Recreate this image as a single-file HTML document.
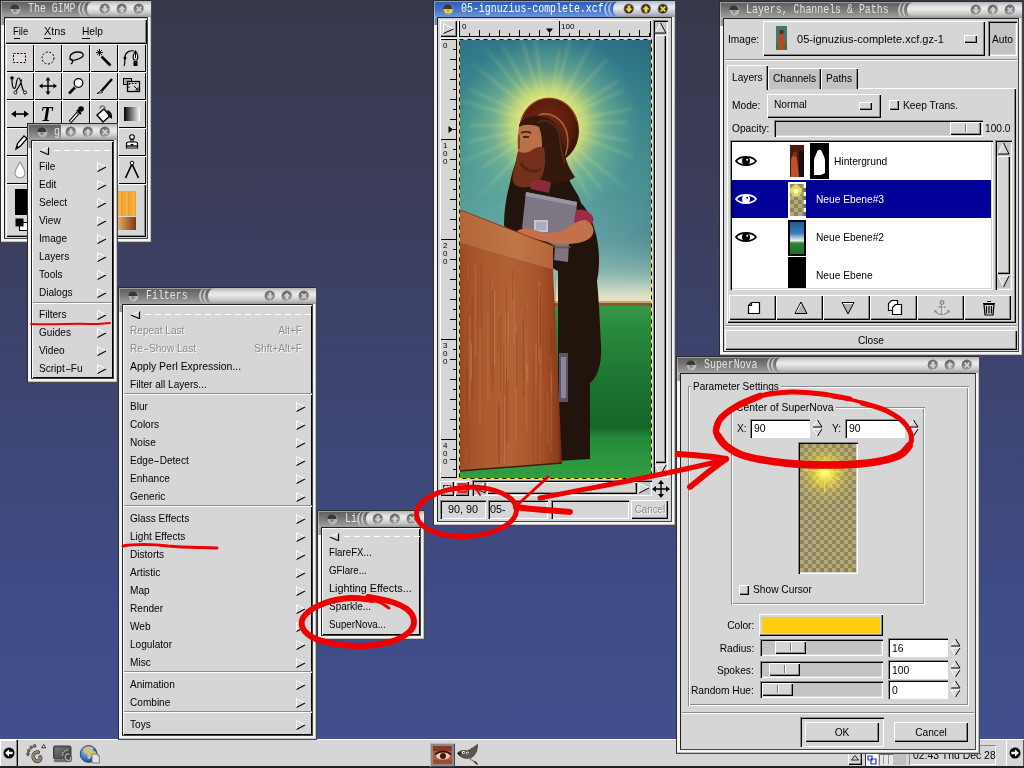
<!DOCTYPE html><html><head><meta charset="utf-8"><title>The GIMP - SuperNova</title><style>
html,body{margin:0;padding:0}
body{width:1024px;height:768px;overflow:hidden;position:relative;background:linear-gradient(180deg,#38384c 0,#3b3d5a 25%,#3d4470 50%,#3f4b84 75%,#41518e 100%);font:11px/14px "Liberation Sans",sans-serif;color:#000}
div,span.t,span.tt,svg{position:absolute;box-sizing:border-box}
svg{overflow:visible}
svg.clip{overflow:hidden}
.t,.tt{opacity:.999}
.t{white-space:nowrap;transform-origin:0 0;line-height:14px}
.tt{font:10px/12px "Liberation Mono",monospace;white-space:nowrap;transform-origin:0 0;transform:scale(.99,1.27);letter-spacing:0}
.hy{display:inline-block;transform:scaleX(1.8);margin:0 1.5px}
.dis{color:#8a8a8a;text-shadow:1px 1px 0 #fff}
.r{background:#d6d6d6;box-shadow:inset 1px 1px 0 #fff,inset -1px -1px 0 #000,inset -2px -2px 0 #8a8a8a}
.rt{background:#d6d6d6;box-shadow:inset 1px 1px 0 #fff,inset -1px -1px 0 #000}
.s{box-shadow:inset 1px 1px 0 #8a8a8a,inset 2px 2px 0 #000,inset -1px -1px 0 #fff,inset -2px -2px 0 #d6d6d6}
.s2{box-shadow:inset 1px 1px 0 #8a8a8a,inset 2px 2px 0 #000,inset -1px -1px 0 #fff}
.wf{background:#f4f4f4;border:1px solid;border-color:#2c2c2c #4a4a4a #4a4a4a #2c2c2c;box-shadow:inset -1px -1px 0 #bdbdbd}
.wc{background:#d6d6d6;border:1px solid;border-color:#222 #444 #444 #222}
.wm{box-shadow:inset 1px 1px 0 #fff,inset -1px -1px 0 #000}
.tb{box-shadow:inset 1px 1px 0 rgba(255,255,255,.4)}
.tbi{background:linear-gradient(180deg,#5c5c5c 0,#7a7a7a 50%,#a2a2a2 100%)}
.tba{background:linear-gradient(180deg,#2f5cb4 0,#3f70c8 50%,#6d96dc 100%)}
.tbp{border-radius:8px 0 0 8px/9px 0 0 9px;border-left:2px solid #c8c8c8;background:transparent}
.tbpa{border-left-color:#a8c0ec}
.tbl{background:linear-gradient(180deg,#b4b4b4 0,#e2e2e2 28%,#eaeaea 45%,#c4c4c4 78%,#989898 100%);border-radius:8px 0 0 8px/9px 0 0 9px}
.tbn{border-radius:0}
.tbla{background:linear-gradient(180deg,#b0b8c8 0,#e0e4ee 30%,#e6e8f0 45%,#b8bcc8 80%,#9094a0 100%)}
</style></head><body>
<svg width="0" height="0" style="left:0;top:0"><defs><linearGradient id="gi" x1="0" y1="0" x2="0" y2="1"><stop offset="0" stop-color="#666"/><stop offset="1" stop-color="#9c9c9c"/></linearGradient><linearGradient id="ring" x1="0" y1="0" x2="1" y2="1"><stop offset="0" stop-color="#4a4a4a"/><stop offset=".5" stop-color="#8a8a8a"/><stop offset="1" stop-color="#fff"/></linearGradient><radialGradient id="ya" cx=".4" cy=".3" r=".8"><stop offset="0" stop-color="#fff6a0"/><stop offset=".6" stop-color="#f0d030"/><stop offset="1" stop-color="#a88a10"/></radialGradient><radialGradient id="globe" cx=".35" cy=".3" r=".8"><stop offset="0" stop-color="#9cc4f4"/><stop offset=".6" stop-color="#3a6ec8"/><stop offset="1" stop-color="#1c3a88"/></radialGradient><linearGradient id="tg" x1="0" y1="0" x2="1" y2="0"><stop offset="0" stop-color="#000"/><stop offset="1" stop-color="#fff"/></linearGradient></defs></svg>
<div class="" style="left:0px;top:739px;width:1024px;height:29px;background:#d6d6d6;border-top:1px solid #fff"></div>
<div class="" style="left:0px;top:766px;width:1024px;height:2px;background:#222"></div>
<div class="" style="left:0px;top:740px;width:18px;height:26px;background:#d6d6d6;box-shadow:inset -1px 0 0 #000,inset -2px 0 0 #8a8a8a,inset 1px 1px 0 #fff"></div>
<div class="" style="left:1006px;top:740px;width:18px;height:26px;background:#d6d6d6;box-shadow:inset 1px 0 0 #fff,inset -1px 0 0 #555"></div>
<svg style="left:3px;top:747px" width="12" height="12" viewBox="0 0 12 12" ><circle cx="6" cy="6" r="5.5" fill="#000"/><path d="M2 6l4-3.5v2.2h3.6v2.6H6v2.2z" fill="#fff"/></svg>
<svg style="left:1009px;top:747px" width="12" height="12" viewBox="0 0 12 12" ><circle cx="6" cy="6" r="5.5" fill="#000"/><path d="M10 6l-4-3.5v2.2H2.4v2.6H6v2.2z" fill="#fff"/></svg>
<svg style="left:24px;top:744px" width="24" height="22" viewBox="0 0 24 22" ><path d="M14.200 8.200C11.200 7.600 8.800 10 9.200 13c.4 3 2.900 4.800 5.400 4.100 2-.6 2.600-2.700 1.500-4" fill="none" stroke="#4a443e" stroke-width="3.800" stroke-linecap="round"/><path d="M14.200 8.200C11.200 7.600 8.800 10 9.200 13c.4 3 2.900 4.800 5.400 4.100 2-.6 2.600-2.700 1.500-4" fill="none" stroke="#90867c" stroke-width="2.300" stroke-linecap="round"/><g fill="#7c7268" stroke="#3c362e" stroke-width=".7"><ellipse cx="4" cy="10" rx="1.300" ry="1.600"/><ellipse cx="4.800" cy="6.600" rx="1.300" ry="1.500"/><ellipse cx="7.200" cy="3.400" rx="1.300" ry="1.500"/><ellipse cx="10.600" cy="1.900" rx="1.400" ry="1.500"/></g><path d="M17.700 3.800l2-3.300 2 3.300z" fill="#fff" stroke="#000" stroke-width=".8"/></svg>
<svg style="left:52px;top:744px" width="22" height="22" viewBox="0 0 22 22" ><defs><linearGradient id="scr" x1="0" y1="0" x2="1" y2="1"><stop offset="0" stop-color="#7a7a7a"/><stop offset="1" stop-color="#3c3c3c"/></linearGradient></defs><rect x="1.500" y="2" width="17.500" height="13" rx="1.500" fill="#585858" stroke="#3a3a3a"/><rect x="3" y="3.500" width="14.500" height="10" fill="url(#scr)"/><path d="M2 16h17l-.5 1.800H2.500z" fill="#7a7a7a" stroke="#4a4a4a" stroke-width=".5"/><path d="M17 10C14.600 9.600 13 11.300 13.300 13.500c.3 2.200 2.200 3.500 4 3 1.500-.4 1.900-2 1.100-3" fill="none" stroke="#3c3834" stroke-width="2.800" stroke-linecap="round"/><path d="M17 10C14.600 9.600 13 11.300 13.300 13.500c.3 2.200 2.200 3.500 4 3 1.500-.4 1.900-2 1.100-3" fill="none" stroke="#b0a8a0" stroke-width="1.600" stroke-linecap="round"/><g fill="#b0a8a0"><circle cx="10.500" cy="11" r=".9"/><circle cx="11" cy="8.700" r=".9"/><circle cx="12.700" cy="6.800" r=".9"/><circle cx="15" cy="6" r=".9"/></g></svg>
<svg style="left:79px;top:744px" width="24" height="22" viewBox="0 0 24 22" ><circle cx="9.600" cy="10" r="8.400" fill="url(#globe)" stroke="#1c3470" stroke-width=".8"/><path d="M6 3.500c2.500-1.500 6-1.500 8 0 1 1-1 2 0 3 1 .8 2.500.5 3 2s-1 3-2.500 3c-2 0-2.500 1.500-3.500 3-.8 1.200-2 .5-2.500-1s.5-2.500-.5-3.500-3-.5-3.500-2 0-3.500 1.500-4.500z" fill="#d2c27a"/><path d="M13 10h5.500l1.800 1.800V19H13z" fill="#e4e4dc" stroke="#6a6a6a" stroke-width=".8"/><path d="M18.500 10v1.800h1.800" fill="none" stroke="#6a6a6a" stroke-width=".6"/></svg>
<div class="" style="left:430px;top:743px;width:25px;height:24px;background:#8a8a8a;box-shadow:inset 1px 1px 0 #b8b8b8,inset -1px -1px 0 #444"></div>
<svg style="left:433px;top:746px" width="19" height="18" viewBox="0 0 19 18" ><rect width="19" height="18" fill="#b4583c"/><rect y="0" width="19" height="5" fill="#8a3a28"/><ellipse cx="10" cy="10" rx="7" ry="3.500" fill="#e8c8b8"/><circle cx="10" cy="10" r="3" fill="#3a1a10"/><path d="M2 8.500c4-4 12-4 16 0" stroke="#3a1008" stroke-width="1.600" fill="none"/><rect y="14" width="19" height="4" fill="#a04830"/></svg>
<svg style="left:456px;top:743px" width="24" height="24" viewBox="0 0 24 24" ><path d="M2 9.500c3-2 6-2.500 9-1.500 3-1 7-4 10.500-6.500 0 4.500-1 8.500-4 11.500-3 2.800-8 3-11.500 1.200C3.500 13 2 11.500 2 9.500z" fill="#5c564c" stroke="#2e2a24" stroke-width=".7"/><circle cx="7.500" cy="9.500" r="2" fill="#fff" stroke="#222" stroke-width=".5"/><circle cx="11.500" cy="10" r="1.800" fill="#fff" stroke="#222" stroke-width=".5"/><circle cx="7.800" cy="9.800" r=".8" fill="#000"/><circle cx="11.800" cy="10.300" r=".7" fill="#000"/><ellipse cx="3.300" cy="10.500" rx="1.800" ry="1.300" fill="#1c1c1c"/><path d="M12 14.500l8.500 5.500" stroke="#8a7a5a" stroke-width="1.300"/><path d="M18.500 18.500l3 3" stroke="#333" stroke-width="1.600"/></svg>
<div class="" style="left:848px;top:752px;width:14px;height:13px;background:#d6d6d6;box-shadow:inset 1px 1px 0 #fff,inset -1px -1px 0 #000,inset -2px -2px 0 #8a8a8a"></div>
<svg style="left:850px;top:754px" width="10" height="8" viewBox="0 0 10 8" ><path d="M1.500 6L5 1.500 8.500 6z" fill="none" stroke="#222" stroke-width="1"/></svg>
<div class="" style="left:865px;top:752px;width:13px;height:14px;background:#fff;box-shadow:inset 1px 1px 0 #333"></div>
<svg style="left:866px;top:753px" width="12" height="13" viewBox="0 0 12 13" ><path d="M2 3h4v4H2zM5 6h5v5H5z" fill="none" stroke="#2030c0" stroke-width="1.200"/></svg>
<div class="" style="left:879px;top:754px;width:14px;height:11px;background:#e8e8e8;box-shadow:inset 1px 1px 0 #777"></div>
<div class="" style="left:883px;top:755px;width:1px;height:9px;background:#999"></div>
<div class="" style="left:888px;top:755px;width:1px;height:9px;background:#999"></div>
<div class="" style="left:893px;top:754px;width:13px;height:11px;background:#c0c0c0"></div>
<div class="" style="left:909px;top:745px;width:87px;height:20px;background:#d6d6d6;box-shadow:inset 1px 1px 0 #8a8a8a,inset -1px -1px 0 #fff"></div>
<span class="t " style="left:913px;top:748.4px;transform:scaleX(0.948);">02:43 Thu Dec 28</span>
<div class="wf" style="left:0px;top:0px;width:152px;height:243px;"></div>
<div class="tb tbi" style="left:1px;top:1px;width:150px;height:16px;"></div>
<div class="tb tbi" style="left:1px;top:17px;width:3px;height:8px;background:#9a9a9a"></div>
<div class="tbp " style="left:78px;top:1px;width:12px;height:16px;"></div>
<div class="tbp " style="left:82px;top:1px;width:12px;height:16px;"></div>
<div class="tbl " style="left:87px;top:1px;width:64px;height:16px;"></div>
<svg style="left:8px;top:2px" width="14" height="14" viewBox="0 0 14 14" ><circle cx="7" cy="7" r="5.400" fill="url(#ring)"/><circle cx="7" cy="7" r="4.500" fill="url(#gi)"/><path d="M2.500 7A4.500 4.500 0 0 0 11.500 7z" fill="#b4b4b4"/><path d="M2.500 7A4.500 4.500 0 0 1 11.500 7z" fill="#383838"/><path d="M4.600 7.600h4.800L7 10.400z" fill="#7c7c7c"/></svg>
<svg style="left:132px;top:2px" width="14" height="14" viewBox="0 0 14 14" ><circle cx="7" cy="7" r="5.400" fill="url(#ring)"/><circle cx="7" cy="7" r="4.500" fill="url(#gi)"/><path d="M4.700 4.700l4.600 4.600M9.300 4.700l-4.600 4.600" stroke="#d2d2d2" stroke-width="1.700" fill="none"/></svg>
<svg style="left:115px;top:2px" width="14" height="14" viewBox="0 0 14 14" ><circle cx="7" cy="7" r="5.400" fill="url(#ring)"/><circle cx="7" cy="7" r="4.500" fill="url(#gi)"/><path d="M5.600 10.600h2.800v-3h2.200L7 3.400 3.400 7.600h2.200z" fill="#d2d2d2"/></svg>
<svg style="left:98px;top:2px" width="14" height="14" viewBox="0 0 14 14" ><circle cx="7" cy="7" r="5.400" fill="url(#ring)"/><circle cx="7" cy="7" r="4.500" fill="url(#gi)"/><path d="M5.600 3.400h2.800v3h2.200L7 10.600 3.400 6.400h2.200z" fill="#d2d2d2"/></svg>
<span class="tt" style="left:28px;top:2.3px;color:#e4e4e4">The GIMP</span>
<div class="wc" style="left:4px;top:17px;width:144px;height:222px;"></div>
<div class="r" style="left:5px;top:19px;width:142px;height:25px;"></div>
<span class="t " style="left:13.3px;top:23.9px;transform:scaleX(0.851);">File</span>
<span class="t " style="left:44px;top:23.9px;transform:scaleX(0.982);">Xtns</span>
<span class="t " style="left:82px;top:23.9px;transform:scaleX(0.927);">Help</span>
<div class="" style="left:14px;top:37.5px;width:6px;height:1px;background:#000"></div>
<div class="" style="left:44px;top:37.5px;width:7px;height:1px;background:#000"></div>
<div class="" style="left:82px;top:37.5px;width:8px;height:1px;background:#000"></div>
<div class="rt" style="left:6px;top:44px;width:28px;height:28px;"></div>
<svg style="left:6px;top:44px" width="28" height="28" viewBox="0 0 28 28" ><rect x="7.500" y="9.500" width="12" height="9" fill="#e4dcdc" stroke="#000" stroke-dasharray="2 1.500"/></svg>
<div class="rt" style="left:34px;top:44px;width:28px;height:28px;"></div>
<svg style="left:34px;top:44px" width="28" height="28" viewBox="0 0 28 28" ><circle cx="14" cy="14" r="6" fill="none" stroke="#000" stroke-dasharray="2 1.600"/></svg>
<div class="rt" style="left:62px;top:44px;width:28px;height:28px;"></div>
<svg style="left:62px;top:44px" width="28" height="28" viewBox="0 0 28 28" ><path d="M8 13c0-3 4-5 8-5s6 2 5 4-5 3-8 4-4 0-5-1zM9.500 15c1.500 1 2 3-.5 5" fill="none" stroke="#000" stroke-width="1.300"/></svg>
<div class="rt" style="left:90px;top:44px;width:28px;height:28px;"></div>
<svg style="left:90px;top:44px" width="28" height="28" viewBox="0 0 28 28" ><path d="M11.500 12.500l9 9" stroke="#000" stroke-width="2.600"/><path d="M7 6l5 5M12 6l-5 5M9.500 5v7M6 8.500h7" stroke="#000" stroke-width=".9"/></svg>
<div class="rt" style="left:118px;top:44px;width:28px;height:28px;"></div>
<svg style="left:118px;top:44px" width="28" height="28" viewBox="0 0 28 28" ><path d="M6 22c2-4 0-6 1-10s5-6 9-5" fill="none" stroke="#000" stroke-width="1.200"/><circle cx="7" cy="14" r="1.500"/><path d="M17.500 7c-3 4-3 6-1.500 9h3c1.500-3 1.500-5-1.500-9z" fill="#fff" stroke="#000" stroke-width="1.200"/><path d="M17.500 8v6" stroke="#000"/><rect x="15.500" y="17" width="4" height="5"/></svg>
<div class="rt" style="left:6px;top:72px;width:28px;height:28px;"></div>
<svg style="left:6px;top:72px" width="28" height="28" viewBox="0 0 28 28" ><circle cx="6" cy="6" r="1.800"/><path d="M6 7.500c0 4 .500 9 2.500 9s1.500-10.500 4-10.500c2.500 0 2 6 5 13M15.500 7.500c0 4-3 8-5.500 11.500" fill="none" stroke="#000" stroke-width="1.200"/><circle cx="9.500" cy="20.500" r="1.500" fill="#fff" stroke="#000"/><circle cx="19" cy="20.500" r="1.500" fill="#fff" stroke="#000"/></svg>
<div class="rt" style="left:34px;top:72px;width:28px;height:28px;"></div>
<svg style="left:34px;top:72px" width="28" height="28" viewBox="0 0 28 28" ><path d="M14 7v14M7 14h14" stroke="#000" stroke-width="1.400"/><path d="M14 5l2.500 3.500h-5zM14 23l2.500-3.500h-5zM5 14l3.500-2.500v5zM23 14l-3.500-2.500v5z"/></svg>
<div class="rt" style="left:62px;top:72px;width:28px;height:28px;"></div>
<svg style="left:62px;top:72px" width="28" height="28" viewBox="0 0 28 28" ><path d="M13 15.500l-6 6" stroke="#000" stroke-width="2.600"/><circle cx="16.500" cy="11" r="4.300" fill="#fff" stroke="#000" stroke-width="1.300"/></svg>
<div class="rt" style="left:90px;top:72px;width:28px;height:28px;"></div>
<svg style="left:90px;top:72px" width="28" height="28" viewBox="0 0 28 28" ><path d="M22 7L11 19.500" stroke="#000" stroke-width="2.400"/><path d="M11.500 18.500l-4.500 3 5.500-1z" fill="#fff" stroke="#000" stroke-width=".8"/></svg>
<div class="rt" style="left:118px;top:72px;width:28px;height:28px;"></div>
<svg style="left:118px;top:72px" width="28" height="28" viewBox="0 0 28 28" ><rect x="5.500" y="6.500" width="8" height="6" fill="#aaa" stroke="#000"/><rect x="9.500" y="9.500" width="12" height="10" fill="#d6d6d6" stroke="#000" stroke-width="1.300"/><path d="M11 11.500h9M11 11.500v6" stroke="#000" stroke-dasharray="1.500 1.500" fill="none"/><path d="M16 14l4 4m0-2.500v2.500h-2.500" stroke="#000" fill="none"/></svg>
<div class="rt" style="left:6px;top:100px;width:28px;height:28px;"></div>
<svg style="left:6px;top:100px" width="28" height="28" viewBox="0 0 28 28" ><path d="M8 14h12" stroke="#000" stroke-width="1.600"/><path d="M5 14l5-3.500v7zM23 14l-5-3.500v7z"/></svg>
<div class="rt" style="left:34px;top:100px;width:28px;height:28px;"></div>
<span class="t" style="left:40.5px;top:103px;font:italic bold 20px/22px 'Liberation Serif',serif">T</span>
<div class="rt" style="left:62px;top:100px;width:28px;height:28px;"></div>
<svg style="left:62px;top:100px" width="28" height="28" viewBox="0 0 28 28" ><path d="M8 22l8-9" stroke="#000" stroke-width="3.400"/><path d="M8.500 21.500l7-8" stroke="#fff" stroke-width="1.400"/><circle cx="19" cy="9" r="2.800"/><path d="M15 10l4 4" stroke="#000" stroke-width="2.200"/></svg>
<div class="rt" style="left:90px;top:100px;width:28px;height:28px;"></div>
<svg style="left:90px;top:100px" width="28" height="28" viewBox="0 0 28 28" ><path d="M7 15l7-6 6 7-7 6z" fill="#fff" stroke="#000" stroke-width="1.400"/><path d="M17 10c4 1 5.500 4 5 9l-3.500-2.500z"/><path d="M10 9c0-4 5-4 5 0" fill="none" stroke="#777" stroke-width="1.300"/></svg>
<div class="rt" style="left:118px;top:100px;width:28px;height:28px;"></div>
<svg style="left:118px;top:100px" width="28" height="28" viewBox="0 0 28 28" ><rect x="6" y="7" width="16" height="14" fill="url(#tg)"/></svg>
<div class="rt" style="left:6px;top:128px;width:28px;height:28px;"></div>
<svg style="left:6px;top:128px" width="28" height="28" viewBox="0 0 28 28" ><path d="M10 21l1.500-5.500 6.500-7.500 3 2.500-6.500 7.500z" fill="#fff" stroke="#000" stroke-width="1.300"/><path d="M10 21l1-3.500 2.300 2z"/></svg>
<div class="rt" style="left:34px;top:128px;width:28px;height:28px;"></div>
<div class="rt" style="left:62px;top:128px;width:28px;height:28px;"></div>
<div class="rt" style="left:90px;top:128px;width:28px;height:28px;"></div>
<div class="rt" style="left:118px;top:128px;width:28px;height:28px;"></div>
<svg style="left:118px;top:128px" width="28" height="28" viewBox="0 0 28 28" ><circle cx="14" cy="9" r="2.300" fill="#fff" stroke="#000" stroke-width="1.100"/><path d="M13 11.500h2v3h-2z" fill="#fff" stroke="#000"/><path d="M8.500 15.500c0-1 1-1.500 2-1.500h7c1 0 2 .500 2 1.500v4.500h-11z" fill="#fff" stroke="#000" stroke-width="1.200"/><path d="M8.500 18h11" stroke="#000" stroke-width="1.400"/><path d="M12 16h4l-2 1.800z"/></svg>
<div class="rt" style="left:6px;top:156px;width:28px;height:28px;"></div>
<svg style="left:6px;top:156px" width="28" height="28" viewBox="0 0 28 28" ><path d="M14 6c3 5 5 8 5 11a5 5 0 0 1-10 0c0-3 2-6 5-11z" fill="#fff" stroke="#9a9a9a" stroke-width="1.200"/></svg>
<div class="rt" style="left:34px;top:156px;width:28px;height:28px;"></div>
<div class="rt" style="left:62px;top:156px;width:28px;height:28px;"></div>
<div class="rt" style="left:90px;top:156px;width:28px;height:28px;"></div>
<div class="rt" style="left:118px;top:156px;width:28px;height:28px;"></div>
<svg style="left:118px;top:156px" width="28" height="28" viewBox="0 0 28 28" ><circle cx="14" cy="7" r="1.800" fill="#fff" stroke="#000"/><path d="M13.500 9L7.500 22M14.500 9l6 13" stroke="#000" stroke-width="1.700" fill="none"/></svg>
<div class="r" style="left:6px;top:184px;width:140px;height:53px;"></div>
<div class="" style="left:15px;top:189px;width:32px;height:26px;background:#000"></div>
<div class="" style="left:26px;top:200px;width:32px;height:26px;background:#fff;z-index:-1"></div>
<svg style="left:15px;top:218px" width="14" height="14" viewBox="0 0 14 14" ><rect x="4.500" y="4.500" width="8" height="8" fill="#fff" stroke="#000"/><rect x=".5" y=".5" width="8" height="8" fill="#000"/></svg>
<div class="" style="left:117px;top:191px;width:19px;height:25px;background:repeating-linear-gradient(90deg,#f0a030 0,#f8b848 3px,#e89828 5px,#f6b040 7px)"></div>
<div class="" style="left:117px;top:217px;width:19px;height:13px;background:linear-gradient(90deg,#e8b070,#7a3a10)"></div>
<div class="wf" style="left:27px;top:123px;width:91px;height:260px;"></div>
<div class="tb tbi" style="left:28px;top:124px;width:89px;height:16px;"></div>
<div class="tb tbi" style="left:28px;top:140px;width:3px;height:8px;background:#9a9a9a"></div>
<div class="tbl tbn" style="left:61px;top:124px;width:56px;height:16px;"></div>
<svg style="left:35px;top:125px" width="14" height="14" viewBox="0 0 14 14" ><circle cx="7" cy="7" r="5.400" fill="url(#ring)"/><circle cx="7" cy="7" r="4.500" fill="url(#gi)"/><path d="M2.500 7A4.500 4.500 0 0 0 11.500 7z" fill="#b4b4b4"/><path d="M2.500 7A4.500 4.500 0 0 1 11.500 7z" fill="#383838"/><path d="M4.600 7.600h4.800L7 10.400z" fill="#7c7c7c"/></svg>
<svg style="left:98px;top:125px" width="14" height="14" viewBox="0 0 14 14" ><circle cx="7" cy="7" r="5.400" fill="url(#ring)"/><circle cx="7" cy="7" r="4.500" fill="url(#gi)"/><path d="M4.700 4.700l4.600 4.600M9.300 4.700l-4.600 4.600" stroke="#d2d2d2" stroke-width="1.700" fill="none"/></svg>
<svg style="left:81px;top:125px" width="14" height="14" viewBox="0 0 14 14" ><circle cx="7" cy="7" r="5.400" fill="url(#ring)"/><circle cx="7" cy="7" r="4.500" fill="url(#gi)"/><path d="M5.600 10.600h2.800v-3h2.200L7 3.400 3.400 7.600h2.200z" fill="#d2d2d2"/></svg>
<svg style="left:64px;top:125px" width="14" height="14" viewBox="0 0 14 14" ><circle cx="7" cy="7" r="5.400" fill="url(#ring)"/><circle cx="7" cy="7" r="4.500" fill="url(#gi)"/><path d="M5.600 3.400h2.800v3h2.200L7 10.600 3.400 6.400h2.200z" fill="#d2d2d2"/></svg>
<span class="tt" style="left:54px;top:125.3px;color:#e4e4e4">g</span>
<div class="wc wm" style="left:31px;top:140px;width:83px;height:239px;"></div>
<svg style="left:38px;top:146px" width="72" height="10" viewBox="0 0 72 10" ><path d="M10.5 1.5V9" stroke="#000" stroke-width="1.2" fill="none"/><path d="M10 1.5L2 5" stroke="#fff" fill="none"/><path d="M2 5L10 8.5" stroke="#000" stroke-width="1.1" fill="none"/><path d="M16 4.5H72" stroke="#fff" stroke-width="1" stroke-dasharray="6 4" fill="none"/></svg>
<span class="t " style="left:39px;top:159.4px;transform:scaleX(0.916);">File</span>
<svg style="left:96px;top:162px" width="11" height="11" viewBox="0 0 11 11" ><path d="M1.5 9.5V0.5L10 5" fill="none" stroke="#fff" stroke-width="1"/><path d="M1.5 9.5L10 5" fill="none" stroke="#000" stroke-width="1.1"/></svg>
<span class="t " style="left:39px;top:177.4px;transform:scaleX(0.916);">Edit</span>
<svg style="left:96px;top:180px" width="11" height="11" viewBox="0 0 11 11" ><path d="M1.5 9.5V0.5L10 5" fill="none" stroke="#fff" stroke-width="1"/><path d="M1.5 9.5L10 5" fill="none" stroke="#000" stroke-width="1.1"/></svg>
<span class="t " style="left:39px;top:195.4px;transform:scaleX(0.916);">Select</span>
<svg style="left:96px;top:198px" width="11" height="11" viewBox="0 0 11 11" ><path d="M1.5 9.5V0.5L10 5" fill="none" stroke="#fff" stroke-width="1"/><path d="M1.5 9.5L10 5" fill="none" stroke="#000" stroke-width="1.1"/></svg>
<span class="t " style="left:39px;top:213.4px;transform:scaleX(0.916);">View</span>
<svg style="left:96px;top:216px" width="11" height="11" viewBox="0 0 11 11" ><path d="M1.5 9.5V0.5L10 5" fill="none" stroke="#fff" stroke-width="1"/><path d="M1.5 9.5L10 5" fill="none" stroke="#000" stroke-width="1.1"/></svg>
<span class="t " style="left:39px;top:231.4px;transform:scaleX(0.916);">Image</span>
<svg style="left:96px;top:234px" width="11" height="11" viewBox="0 0 11 11" ><path d="M1.5 9.5V0.5L10 5" fill="none" stroke="#fff" stroke-width="1"/><path d="M1.5 9.5L10 5" fill="none" stroke="#000" stroke-width="1.1"/></svg>
<span class="t " style="left:39px;top:249.4px;transform:scaleX(0.916);">Layers</span>
<svg style="left:96px;top:252px" width="11" height="11" viewBox="0 0 11 11" ><path d="M1.5 9.5V0.5L10 5" fill="none" stroke="#fff" stroke-width="1"/><path d="M1.5 9.5L10 5" fill="none" stroke="#000" stroke-width="1.1"/></svg>
<span class="t " style="left:39px;top:267.4px;transform:scaleX(0.916);">Tools</span>
<svg style="left:96px;top:270px" width="11" height="11" viewBox="0 0 11 11" ><path d="M1.5 9.5V0.5L10 5" fill="none" stroke="#fff" stroke-width="1"/><path d="M1.5 9.5L10 5" fill="none" stroke="#000" stroke-width="1.1"/></svg>
<span class="t " style="left:39px;top:285.4px;transform:scaleX(0.916);">Dialogs</span>
<svg style="left:96px;top:288px" width="11" height="11" viewBox="0 0 11 11" ><path d="M1.5 9.5V0.5L10 5" fill="none" stroke="#fff" stroke-width="1"/><path d="M1.5 9.5L10 5" fill="none" stroke="#000" stroke-width="1.1"/></svg>
<div class="" style="left:33px;top:302px;width:79px;height:1px;background:#8c8c8c"></div>
<div class="" style="left:33px;top:303px;width:79px;height:1px;background:#fff"></div>
<span class="t " style="left:39px;top:307.4px;transform:scaleX(0.916);">Filters</span>
<svg style="left:96px;top:310px" width="11" height="11" viewBox="0 0 11 11" ><path d="M1.5 9.5V0.5L10 5" fill="none" stroke="#fff" stroke-width="1"/><path d="M1.5 9.5L10 5" fill="none" stroke="#000" stroke-width="1.1"/></svg>
<span class="t " style="left:39px;top:325.4px;transform:scaleX(0.916);">Guides</span>
<svg style="left:96px;top:328px" width="11" height="11" viewBox="0 0 11 11" ><path d="M1.5 9.5V0.5L10 5" fill="none" stroke="#fff" stroke-width="1"/><path d="M1.5 9.5L10 5" fill="none" stroke="#000" stroke-width="1.1"/></svg>
<span class="t " style="left:39px;top:343.4px;transform:scaleX(0.916);">Video</span>
<svg style="left:96px;top:346px" width="11" height="11" viewBox="0 0 11 11" ><path d="M1.5 9.5V0.5L10 5" fill="none" stroke="#fff" stroke-width="1"/><path d="M1.5 9.5L10 5" fill="none" stroke="#000" stroke-width="1.1"/></svg>
<span class="t " style="left:39px;top:361.4px;transform:scaleX(0.916);">Script<span class="hy">-</span>Fu</span>
<svg style="left:96px;top:364px" width="11" height="11" viewBox="0 0 11 11" ><path d="M1.5 9.5V0.5L10 5" fill="none" stroke="#fff" stroke-width="1"/><path d="M1.5 9.5L10 5" fill="none" stroke="#000" stroke-width="1.1"/></svg>
<div class="wf" style="left:118px;top:287px;width:199px;height:453px;"></div>
<div class="tb tbi" style="left:119px;top:288px;width:197px;height:16px;"></div>
<div class="tb tbi" style="left:119px;top:304px;width:3px;height:8px;background:#9a9a9a"></div>
<div class="tbp " style="left:199px;top:288px;width:12px;height:16px;"></div>
<div class="tbp " style="left:203px;top:288px;width:12px;height:16px;"></div>
<div class="tbl " style="left:208px;top:288px;width:108px;height:16px;"></div>
<svg style="left:126px;top:289px" width="14" height="14" viewBox="0 0 14 14" ><circle cx="7" cy="7" r="5.400" fill="url(#ring)"/><circle cx="7" cy="7" r="4.500" fill="url(#gi)"/><path d="M2.500 7A4.500 4.500 0 0 0 11.500 7z" fill="#b4b4b4"/><path d="M2.500 7A4.500 4.500 0 0 1 11.500 7z" fill="#383838"/><path d="M4.600 7.600h4.800L7 10.400z" fill="#7c7c7c"/></svg>
<svg style="left:297px;top:289px" width="14" height="14" viewBox="0 0 14 14" ><circle cx="7" cy="7" r="5.400" fill="url(#ring)"/><circle cx="7" cy="7" r="4.500" fill="url(#gi)"/><path d="M4.700 4.700l4.600 4.600M9.300 4.700l-4.600 4.600" stroke="#d2d2d2" stroke-width="1.700" fill="none"/></svg>
<svg style="left:280px;top:289px" width="14" height="14" viewBox="0 0 14 14" ><circle cx="7" cy="7" r="5.400" fill="url(#ring)"/><circle cx="7" cy="7" r="4.500" fill="url(#gi)"/><path d="M5.600 10.600h2.800v-3h2.200L7 3.400 3.400 7.600h2.200z" fill="#d2d2d2"/></svg>
<svg style="left:263px;top:289px" width="14" height="14" viewBox="0 0 14 14" ><circle cx="7" cy="7" r="5.400" fill="url(#ring)"/><circle cx="7" cy="7" r="4.500" fill="url(#gi)"/><path d="M5.600 3.400h2.800v3h2.200L7 10.600 3.400 6.400h2.200z" fill="#d2d2d2"/></svg>
<span class="tt" style="left:145.5px;top:289.3px;color:#e4e4e4">Filters</span>
<div class="wc wm" style="left:122px;top:304px;width:191px;height:432px;"></div>
<svg style="left:129px;top:310px" width="184" height="10" viewBox="0 0 184 10" ><path d="M10.5 1.5V9" stroke="#000" stroke-width="1.2" fill="none"/><path d="M10 1.5L2 5" stroke="#fff" fill="none"/><path d="M2 5L10 8.5" stroke="#000" stroke-width="1.1" fill="none"/><path d="M16 4.5H184" stroke="#fff" stroke-width="1" stroke-dasharray="6 4" fill="none"/></svg>
<span class="t dis" style="left:130px;top:322.9px;transform:scaleX(0.916);">Repeat Last</span>
<span class="t dis" style="right:722px;top:322.9px;transform-origin:100% 0;transform:scaleX(0.916);">Alt+F</span>
<span class="t dis" style="left:130px;top:340.9px;transform:scaleX(0.916);">Re<span class="hy">-</span>Show Last</span>
<span class="t dis" style="right:722px;top:340.9px;transform-origin:100% 0;transform:scaleX(0.916);">Shft+Alt+F</span>
<span class="t " style="left:130px;top:358.9px;transform:scaleX(0.952);">Apply Perl Expression...</span>
<span class="t " style="left:130px;top:376.9px;transform:scaleX(0.916);">Filter all Layers...</span>
<div class="" style="left:124px;top:393px;width:188px;height:1px;background:#8c8c8c"></div>
<div class="" style="left:124px;top:394px;width:188px;height:1px;background:#fff"></div>
<span class="t " style="left:130px;top:398.9px;transform:scaleX(0.916);">Blur</span>
<svg style="left:295px;top:401.5px" width="11" height="11" viewBox="0 0 11 11" ><path d="M1.5 9.5V0.5L10 5" fill="none" stroke="#fff" stroke-width="1"/><path d="M1.5 9.5L10 5" fill="none" stroke="#000" stroke-width="1.1"/></svg>
<span class="t " style="left:130px;top:416.9px;transform:scaleX(0.916);">Colors</span>
<svg style="left:295px;top:419.5px" width="11" height="11" viewBox="0 0 11 11" ><path d="M1.5 9.5V0.5L10 5" fill="none" stroke="#fff" stroke-width="1"/><path d="M1.5 9.5L10 5" fill="none" stroke="#000" stroke-width="1.1"/></svg>
<span class="t " style="left:130px;top:434.9px;transform:scaleX(0.916);">Noise</span>
<svg style="left:295px;top:437.5px" width="11" height="11" viewBox="0 0 11 11" ><path d="M1.5 9.5V0.5L10 5" fill="none" stroke="#fff" stroke-width="1"/><path d="M1.5 9.5L10 5" fill="none" stroke="#000" stroke-width="1.1"/></svg>
<span class="t " style="left:130px;top:452.9px;transform:scaleX(0.916);">Edge<span class="hy">-</span>Detect</span>
<svg style="left:295px;top:455.5px" width="11" height="11" viewBox="0 0 11 11" ><path d="M1.5 9.5V0.5L10 5" fill="none" stroke="#fff" stroke-width="1"/><path d="M1.5 9.5L10 5" fill="none" stroke="#000" stroke-width="1.1"/></svg>
<span class="t " style="left:130px;top:470.9px;transform:scaleX(0.916);">Enhance</span>
<svg style="left:295px;top:473.5px" width="11" height="11" viewBox="0 0 11 11" ><path d="M1.5 9.5V0.5L10 5" fill="none" stroke="#fff" stroke-width="1"/><path d="M1.5 9.5L10 5" fill="none" stroke="#000" stroke-width="1.1"/></svg>
<span class="t " style="left:130px;top:488.9px;transform:scaleX(0.916);">Generic</span>
<svg style="left:295px;top:491.5px" width="11" height="11" viewBox="0 0 11 11" ><path d="M1.5 9.5V0.5L10 5" fill="none" stroke="#fff" stroke-width="1"/><path d="M1.5 9.5L10 5" fill="none" stroke="#000" stroke-width="1.1"/></svg>
<div class="" style="left:124px;top:505px;width:188px;height:1px;background:#8c8c8c"></div>
<div class="" style="left:124px;top:506px;width:188px;height:1px;background:#fff"></div>
<span class="t " style="left:130px;top:510.9px;transform:scaleX(0.916);">Glass Effects</span>
<svg style="left:295px;top:513.5px" width="11" height="11" viewBox="0 0 11 11" ><path d="M1.5 9.5V0.5L10 5" fill="none" stroke="#fff" stroke-width="1"/><path d="M1.5 9.5L10 5" fill="none" stroke="#000" stroke-width="1.1"/></svg>
<span class="t " style="left:130px;top:528.9px;transform:scaleX(0.916);">Light Effects</span>
<svg style="left:295px;top:531.5px" width="11" height="11" viewBox="0 0 11 11" ><path d="M1.5 9.5V0.5L10 5" fill="none" stroke="#fff" stroke-width="1"/><path d="M1.5 9.5L10 5" fill="none" stroke="#000" stroke-width="1.1"/></svg>
<span class="t " style="left:130px;top:546.9px;transform:scaleX(0.916);">Distorts</span>
<svg style="left:295px;top:549.5px" width="11" height="11" viewBox="0 0 11 11" ><path d="M1.5 9.5V0.5L10 5" fill="none" stroke="#fff" stroke-width="1"/><path d="M1.5 9.5L10 5" fill="none" stroke="#000" stroke-width="1.1"/></svg>
<span class="t " style="left:130px;top:564.9px;transform:scaleX(0.916);">Artistic</span>
<svg style="left:295px;top:567.5px" width="11" height="11" viewBox="0 0 11 11" ><path d="M1.5 9.5V0.5L10 5" fill="none" stroke="#fff" stroke-width="1"/><path d="M1.5 9.5L10 5" fill="none" stroke="#000" stroke-width="1.1"/></svg>
<span class="t " style="left:130px;top:582.9px;transform:scaleX(0.916);">Map</span>
<svg style="left:295px;top:585.5px" width="11" height="11" viewBox="0 0 11 11" ><path d="M1.5 9.5V0.5L10 5" fill="none" stroke="#fff" stroke-width="1"/><path d="M1.5 9.5L10 5" fill="none" stroke="#000" stroke-width="1.1"/></svg>
<span class="t " style="left:130px;top:600.9px;transform:scaleX(0.916);">Render</span>
<svg style="left:295px;top:603.5px" width="11" height="11" viewBox="0 0 11 11" ><path d="M1.5 9.5V0.5L10 5" fill="none" stroke="#fff" stroke-width="1"/><path d="M1.5 9.5L10 5" fill="none" stroke="#000" stroke-width="1.1"/></svg>
<span class="t " style="left:130px;top:618.9px;transform:scaleX(0.916);">Web</span>
<svg style="left:295px;top:621.5px" width="11" height="11" viewBox="0 0 11 11" ><path d="M1.5 9.5V0.5L10 5" fill="none" stroke="#fff" stroke-width="1"/><path d="M1.5 9.5L10 5" fill="none" stroke="#000" stroke-width="1.1"/></svg>
<span class="t " style="left:130px;top:636.9px;transform:scaleX(0.916);">Logulator</span>
<svg style="left:295px;top:639.5px" width="11" height="11" viewBox="0 0 11 11" ><path d="M1.5 9.5V0.5L10 5" fill="none" stroke="#fff" stroke-width="1"/><path d="M1.5 9.5L10 5" fill="none" stroke="#000" stroke-width="1.1"/></svg>
<span class="t " style="left:130px;top:654.9px;transform:scaleX(0.916);">Misc</span>
<svg style="left:295px;top:657.5px" width="11" height="11" viewBox="0 0 11 11" ><path d="M1.5 9.5V0.5L10 5" fill="none" stroke="#fff" stroke-width="1"/><path d="M1.5 9.5L10 5" fill="none" stroke="#000" stroke-width="1.1"/></svg>
<div class="" style="left:124px;top:671px;width:188px;height:1px;background:#8c8c8c"></div>
<div class="" style="left:124px;top:672px;width:188px;height:1px;background:#fff"></div>
<span class="t " style="left:130px;top:676.9px;transform:scaleX(0.916);">Animation</span>
<svg style="left:295px;top:679.5px" width="11" height="11" viewBox="0 0 11 11" ><path d="M1.5 9.5V0.5L10 5" fill="none" stroke="#fff" stroke-width="1"/><path d="M1.5 9.5L10 5" fill="none" stroke="#000" stroke-width="1.1"/></svg>
<span class="t " style="left:130px;top:694.9px;transform:scaleX(0.916);">Combine</span>
<svg style="left:295px;top:697.5px" width="11" height="11" viewBox="0 0 11 11" ><path d="M1.5 9.5V0.5L10 5" fill="none" stroke="#fff" stroke-width="1"/><path d="M1.5 9.5L10 5" fill="none" stroke="#000" stroke-width="1.1"/></svg>
<div class="" style="left:124px;top:711px;width:188px;height:1px;background:#8c8c8c"></div>
<div class="" style="left:124px;top:712px;width:188px;height:1px;background:#fff"></div>
<span class="t " style="left:130px;top:716.9px;transform:scaleX(0.916);">Toys</span>
<svg style="left:295px;top:719.5px" width="11" height="11" viewBox="0 0 11 11" ><path d="M1.5 9.5V0.5L10 5" fill="none" stroke="#fff" stroke-width="1"/><path d="M1.5 9.5L10 5" fill="none" stroke="#000" stroke-width="1.1"/></svg>
<div class="wf" style="left:317px;top:510px;width:108px;height:130px;"></div>
<div class="tb tbi" style="left:318px;top:511px;width:106px;height:16px;"></div>
<div class="tb tbi" style="left:318px;top:527px;width:3px;height:8px;background:#9a9a9a"></div>
<div class="tbp " style="left:357px;top:511px;width:12px;height:16px;"></div>
<div class="tbp " style="left:361px;top:511px;width:12px;height:16px;"></div>
<div class="tbl " style="left:366px;top:511px;width:58px;height:16px;"></div>
<svg style="left:325px;top:512px" width="14" height="14" viewBox="0 0 14 14" ><circle cx="7" cy="7" r="5.400" fill="url(#ring)"/><circle cx="7" cy="7" r="4.500" fill="url(#gi)"/><path d="M2.500 7A4.500 4.500 0 0 0 11.500 7z" fill="#b4b4b4"/><path d="M2.500 7A4.500 4.500 0 0 1 11.500 7z" fill="#383838"/><path d="M4.600 7.600h4.800L7 10.400z" fill="#7c7c7c"/></svg>
<svg style="left:405px;top:512px" width="14" height="14" viewBox="0 0 14 14" ><circle cx="7" cy="7" r="5.400" fill="url(#ring)"/><circle cx="7" cy="7" r="4.500" fill="url(#gi)"/><path d="M4.700 4.700l4.600 4.600M9.300 4.700l-4.600 4.600" stroke="#d2d2d2" stroke-width="1.700" fill="none"/></svg>
<svg style="left:388px;top:512px" width="14" height="14" viewBox="0 0 14 14" ><circle cx="7" cy="7" r="5.400" fill="url(#ring)"/><circle cx="7" cy="7" r="4.500" fill="url(#gi)"/><path d="M5.600 10.600h2.800v-3h2.200L7 3.400 3.400 7.600h2.200z" fill="#d2d2d2"/></svg>
<svg style="left:371px;top:512px" width="14" height="14" viewBox="0 0 14 14" ><circle cx="7" cy="7" r="5.400" fill="url(#ring)"/><circle cx="7" cy="7" r="4.500" fill="url(#gi)"/><path d="M5.600 3.400h2.800v3h2.200L7 10.600 3.400 6.400h2.200z" fill="#d2d2d2"/></svg>
<span class="tt" style="left:344.5px;top:512.3px;color:#e4e4e4">Li</span>
<div class="wc wm" style="left:321px;top:527px;width:100px;height:109px;"></div>
<svg style="left:328px;top:532px" width="92" height="10" viewBox="0 0 92 10" ><path d="M10.5 1.5V9" stroke="#000" stroke-width="1.2" fill="none"/><path d="M10 1.5L2 5" stroke="#fff" fill="none"/><path d="M2 5L10 8.5" stroke="#000" stroke-width="1.1" fill="none"/><path d="M16 4.5H92" stroke="#fff" stroke-width="1" stroke-dasharray="6 4" fill="none"/></svg>
<span class="t " style="left:329px;top:544.9px;transform:scaleX(0.884);">FlareFX...</span>
<span class="t " style="left:329px;top:562.9px;transform:scaleX(0.884);">GFlare...</span>
<span class="t " style="left:329px;top:580.9px;transform:scaleX(0.982);">Lighting Effects...</span>
<span class="t " style="left:329px;top:598.9px;transform:scaleX(0.905);">Sparkle...</span>
<span class="t " style="left:329px;top:616.9px;transform:scaleX(0.884);">SuperNova...</span>
<div class="wf" style="left:433px;top:0px;width:243px;height:526px;"></div>
<div class="tb tba" style="left:434px;top:1px;width:241px;height:16px;"></div>
<div class="tb tba" style="left:434px;top:17px;width:3px;height:8px;background:#6d8fd0"></div>
<div class="tbp tbpa" style="left:604px;top:1px;width:12px;height:16px;"></div>
<div class="tbp tbpa" style="left:608px;top:1px;width:12px;height:16px;"></div>
<div class="tbl tbla" style="left:613px;top:1px;width:62px;height:16px;"></div>
<svg style="left:441px;top:2px" width="14" height="14" viewBox="0 0 14 14" ><circle cx="7" cy="7" r="5.400" fill="url(#ring)"/><circle cx="7" cy="7" r="4.500" fill="#3a3222"/><path d="M2.500 7A4.500 4.500 0 0 0 11.500 7z" fill="#f2d63c"/><path d="M2.500 7A4.500 4.500 0 0 1 11.500 7z" fill="#383838"/><path d="M4.600 7.600h4.800L7 10.400z" fill="#c8a820"/></svg>
<svg style="left:656px;top:2px" width="14" height="14" viewBox="0 0 14 14" ><circle cx="7" cy="7" r="5.400" fill="url(#ring)"/><circle cx="7" cy="7" r="4.500" fill="#3a3222"/><path d="M4.700 4.700l4.600 4.600M9.300 4.700l-4.600 4.600" stroke="#f2d63c" stroke-width="1.700" fill="none"/></svg>
<svg style="left:639px;top:2px" width="14" height="14" viewBox="0 0 14 14" ><circle cx="7" cy="7" r="5.400" fill="url(#ring)"/><circle cx="7" cy="7" r="4.500" fill="#3a3222"/><path d="M5.600 10.600h2.800v-3h2.200L7 3.400 3.400 7.600h2.200z" fill="#f2d63c"/></svg>
<svg style="left:622px;top:2px" width="14" height="14" viewBox="0 0 14 14" ><circle cx="7" cy="7" r="5.400" fill="url(#ring)"/><circle cx="7" cy="7" r="4.500" fill="#3a3222"/><path d="M5.600 3.400h2.800v3h2.200L7 10.600 3.400 6.400h2.200z" fill="#f2d63c"/></svg>
<span class="tt" style="left:460.8px;top:2.3px;color:#fff">05-ignuzius-complete.xcf</span>
<div class="wc" style="left:437px;top:17px;width:235px;height:505px;"></div>
<div class="r" style="left:440px;top:20px;width:17px;height:17px;"></div>
<svg style="left:442px;top:22px" width="13" height="13" viewBox="0 0 13 13" ><path d="M1.500 11.500V1.500L11.500 7" fill="none" stroke="#fff"/><path d="M1.500 11.500L11.500 7" fill="none" stroke="#000"/></svg>
<div class="" style="left:458px;top:20px;width:193px;height:17px;background:#d6d6d6;box-shadow:inset 1px 1px 0 #fff,inset -1px -1px 0 #000"></div>
<svg style="left:458px;top:20px;opacity:.999" width="194" height="17" viewBox="0 0 194 17" ><path d="M1.5 16V1" stroke="#000"/><path d="M11.5 16V13" stroke="#000"/><path d="M21.5 16V10" stroke="#000"/><path d="M31.5 16V13" stroke="#000"/><path d="M41.5 16V10" stroke="#000"/><path d="M51.5 16V13" stroke="#000"/><path d="M61.5 16V10" stroke="#000"/><path d="M71.5 16V13" stroke="#000"/><path d="M81.5 16V10" stroke="#000"/><path d="M91.5 16V13" stroke="#000"/><path d="M101.5 16V1" stroke="#000"/><path d="M111.5 16V13" stroke="#000"/><path d="M121.5 16V10" stroke="#000"/><path d="M131.5 16V13" stroke="#000"/><path d="M141.5 16V10" stroke="#000"/><path d="M151.5 16V13" stroke="#000"/><path d="M161.5 16V10" stroke="#000"/><path d="M171.5 16V13" stroke="#000"/><path d="M181.5 16V10" stroke="#000"/><path d="M191.5 16V13" stroke="#000"/><path d="M91.500 13l-3.500-4.500h7z" fill="#000"/><text x="4" y="8.500" font-size="8" font-family="Liberation Sans,sans-serif">0</text><text x="103" y="8.500" font-size="8" font-family="Liberation Sans,sans-serif">100</text></svg>
<div class="" style="left:440px;top:38px;width:17px;height:440px;background:#d6d6d6;box-shadow:inset 1px 1px 0 #fff,inset -1px -1px 0 #000"></div>
<svg style="left:440px;top:38px;opacity:.999" width="17" height="440" viewBox="0 0 17 440" ><path d="M16 1.5H1" stroke="#000"/><path d="M16 11.5H13" stroke="#000"/><path d="M16 21.5H10" stroke="#000"/><path d="M16 31.5H13" stroke="#000"/><path d="M16 41.5H10" stroke="#000"/><path d="M16 51.5H13" stroke="#000"/><path d="M16 61.5H10" stroke="#000"/><path d="M16 71.5H13" stroke="#000"/><path d="M16 81.5H10" stroke="#000"/><path d="M16 91.5H13" stroke="#000"/><path d="M16 101.5H1" stroke="#000"/><path d="M16 111.5H13" stroke="#000"/><path d="M16 121.5H10" stroke="#000"/><path d="M16 131.5H13" stroke="#000"/><path d="M16 141.5H10" stroke="#000"/><path d="M16 151.5H13" stroke="#000"/><path d="M16 161.5H10" stroke="#000"/><path d="M16 171.5H13" stroke="#000"/><path d="M16 181.5H10" stroke="#000"/><path d="M16 191.5H13" stroke="#000"/><path d="M16 201.5H1" stroke="#000"/><path d="M16 211.5H13" stroke="#000"/><path d="M16 221.5H10" stroke="#000"/><path d="M16 231.5H13" stroke="#000"/><path d="M16 241.5H10" stroke="#000"/><path d="M16 251.5H13" stroke="#000"/><path d="M16 261.5H10" stroke="#000"/><path d="M16 271.5H13" stroke="#000"/><path d="M16 281.5H10" stroke="#000"/><path d="M16 291.5H13" stroke="#000"/><path d="M16 301.5H1" stroke="#000"/><path d="M16 311.5H13" stroke="#000"/><path d="M16 321.5H10" stroke="#000"/><path d="M16 331.5H13" stroke="#000"/><path d="M16 341.5H10" stroke="#000"/><path d="M16 351.5H13" stroke="#000"/><path d="M16 361.5H10" stroke="#000"/><path d="M16 371.5H13" stroke="#000"/><path d="M16 381.5H10" stroke="#000"/><path d="M16 391.5H13" stroke="#000"/><path d="M16 401.5H1" stroke="#000"/><path d="M16 411.5H13" stroke="#000"/><path d="M16 421.5H10" stroke="#000"/><path d="M16 431.5H13" stroke="#000"/><path d="M13 91.500l-4.500-3.500v7z" fill="#000"/><text x="3" y="10" font-size="8" font-family="Liberation Sans,sans-serif">0</text><text x="3" y="110" font-size="8" font-family="Liberation Sans,sans-serif">1</text><text x="3" y="118" font-size="8" font-family="Liberation Sans,sans-serif">0</text><text x="3" y="126" font-size="8" font-family="Liberation Sans,sans-serif">0</text><text x="3" y="210" font-size="8" font-family="Liberation Sans,sans-serif">2</text><text x="3" y="218" font-size="8" font-family="Liberation Sans,sans-serif">0</text><text x="3" y="226" font-size="8" font-family="Liberation Sans,sans-serif">0</text><text x="3" y="310" font-size="8" font-family="Liberation Sans,sans-serif">3</text><text x="3" y="318" font-size="8" font-family="Liberation Sans,sans-serif">0</text><text x="3" y="326" font-size="8" font-family="Liberation Sans,sans-serif">0</text><text x="3" y="410" font-size="8" font-family="Liberation Sans,sans-serif">4</text><text x="3" y="418" font-size="8" font-family="Liberation Sans,sans-serif">0</text><text x="3" y="426" font-size="8" font-family="Liberation Sans,sans-serif">0</text></svg>
<svg style="left:459px;top:39px" width="193" height="440" viewBox="0 0 193 440" class="clip"><defs><linearGradient id="sky" x1="0" y1="0" x2="0" y2="1"><stop offset="0" stop-color="#34808c"/><stop offset=".3" stop-color="#449490"/><stop offset=".6" stop-color="#5aa29c"/><stop offset=".78" stop-color="#74b0a8"/><stop offset=".88" stop-color="#96c2b6"/><stop offset=".95" stop-color="#cddac4"/><stop offset="1" stop-color="#f0e6c6"/></linearGradient><radialGradient id="glow" cx="89" cy="86" r="92" gradientUnits="userSpaceOnUse"><stop offset="0" stop-color="#ffffd8"/><stop offset=".22" stop-color="#f2f080"/><stop offset=".4" stop-color="#d2e078" stop-opacity=".85"/><stop offset=".62" stop-color="#98c890" stop-opacity=".45"/><stop offset="1" stop-color="#70b0a0" stop-opacity="0"/></radialGradient><linearGradient id="grass" x1="0" y1="0" x2="0" y2="1"><stop offset="0" stop-color="#3a9848"/><stop offset=".12" stop-color="#2a8a3c"/><stop offset=".45" stop-color="#1c7432"/><stop offset=".7" stop-color="#16662a"/><stop offset=".76" stop-color="#248a3a"/><stop offset="1" stop-color="#32a044"/></linearGradient><linearGradient id="wood" x1="0" y1="0" x2="1" y2="0"><stop offset="0" stop-color="#9e4c26"/><stop offset=".25" stop-color="#ac5a30"/><stop offset=".5" stop-color="#b26236"/><stop offset=".8" stop-color="#a6522a"/><stop offset=".96" stop-color="#8c3c1a"/><stop offset="1" stop-color="#64260c"/></linearGradient><linearGradient id="woodtop" x1="0" y1="0" x2="1" y2="0"><stop offset="0" stop-color="#b2663a"/><stop offset=".6" stop-color="#c07646"/><stop offset="1" stop-color="#b4663a"/></linearGradient><radialGradient id="edge" cx="70" cy="115" r="165" gradientUnits="userSpaceOnUse"><stop offset=".35" stop-color="#1e5a80" stop-opacity="0"/><stop offset=".75" stop-color="#1e5a80" stop-opacity=".26"/><stop offset="1" stop-color="#1c5078" stop-opacity=".45"/></radialGradient><linearGradient id="fade" x1="0" y1="0" x2="0" y2="1"><stop offset="0" stop-color="#fff"/><stop offset=".75" stop-color="#fff"/><stop offset="1" stop-color="#000"/></linearGradient><mask id="em" maskUnits="userSpaceOnUse" x="0" y="0" width="200" height="256"><rect width="200" height="256" fill="url(#fade)"/></mask><radialGradient id="rayg" cx="89" cy="86" r="110" gradientUnits="userSpaceOnUse"><stop offset="0" stop-color="#fff890" stop-opacity=".5"/><stop offset=".5" stop-color="#e8ec80" stop-opacity=".2"/><stop offset="1" stop-color="#c0e0a0" stop-opacity="0"/></radialGradient><filter id="blur1" x="-10%" y="-10%" width="120%" height="120%"><feGaussianBlur stdDeviation="1.3"/></filter><radialGradient id="hat" cx="88" cy="84" r="34" gradientUnits="userSpaceOnUse"><stop offset="0" stop-color="#742812"/><stop offset=".7" stop-color="#5c1c0c"/><stop offset="1" stop-color="#421208"/></radialGradient></defs><rect width="193" height="440" fill="#f2e6c4"/><rect width="193" height="264" fill="url(#sky)"/><rect width="193" height="256" fill="url(#edge)" mask="url(#em)"/><rect width="193" height="264" fill="url(#glow)"/><path d="M89 86L168.0 81.2L168.1 85.0ZM89 86L169.0 99.8L168.3 103.7ZM89 86L175.0 115.8L173.5 120.0ZM89 86L173.4 151.8L170.1 155.8ZM89 86L144.3 149.0L141.2 151.7ZM89 86L133.5 159.7L129.8 161.8ZM89 86L118.7 159.5L115.1 160.8ZM89 86L107.9 196.5L102.4 197.3ZM89 86L75.5 192.4L70.3 191.6ZM89 86L62.1 164.2L58.3 162.8ZM89 86L43.4 175.1L39.1 172.8ZM89 86L15.3 166.6L11.5 162.9ZM89 86L24.2 130.3L22.1 127.1ZM89 86L-3.7 128.3L-5.6 123.8ZM89 86L9.1 105.0L8.3 101.0ZM89 86L10.5 88.2L10.4 84.4ZM89 86L-17.3 59.3L-15.9 54.2ZM89 86L8.9 52.0L10.7 48.2ZM89 86L11.7 25.9L14.8 22.2ZM89 86L18.5 3.0L22.6 -0.4ZM89 86L41.4 7.8L45.3 5.6ZM89 86L59.6 -1.4L63.9 -2.8ZM89 86L73.7 0.1L77.9 -0.5ZM89 86L98.5 9.9L102.2 10.4ZM89 86L111.5 -11.5L116.2 -10.3ZM89 86L132.5 0.0L136.7 2.2ZM89 86L146.5 18.4L149.7 21.3ZM89 86L158.1 40.4L160.3 43.8ZM89 86L163.6 49.4L165.3 53.1ZM89 86L173.1 67.6L173.9 71.7Z" fill="url(#rayg)" filter="url(#blur1)"/><rect y="262" width="193" height="3" fill="#c8a878"/><rect y="264" width="193" height="4" fill="#8a5a2c"/><rect y="267" width="193" height="173" fill="url(#grass)"/><ellipse cx="90" cy="92" rx="30" ry="33" fill="url(#hat)"/><path d="M62 82a29 31 0 0 1 56 0" fill="none" stroke="#9a4420" stroke-width="1.2"/><path d="M80 76c12-4 24 4 28 18 2 10 0 20-4 26" fill="none" stroke="#a87848" stroke-width="1.6" stroke-opacity=".8"/><path d="M58 120c-4 10-6 18-7 24-4 14-6 28-6 42l8 22 46 24 0 190 32-2 0-76c8-6 12-20 11-38-1-20-2-44-4-64 3-14 3-34-2-50-3-12-8-22-14-28-2-8-6-12-8-16-6-10-10-24-14-36z" fill="#21140c"/><path d="M60 86c6-10 24-12 34-4 8 8 10 22 12 34 2 10 6 16 10 22-10 8-28 8-40 4z" fill="#34180c"/><path d="M78 84c8-6 18 0 22 10 2 10 2 22 6 30" fill="none" stroke="#5a3018" stroke-width="2" stroke-opacity=".7"/><path d="M60 88c4-3 14-3 20 0 3 8 4 18 2 28-6 6-16 6-22 2-2-10-2-20 0-30z" fill="#bc7048"/><path d="M62 94c3-1.500 7-1.500 10 0" stroke="#3a1a0c" stroke-width="1.400" fill="none"/><path d="M64 98h6" stroke="#2a120a" stroke-width="1.600"/><path d="M60 96v14" stroke="#8a4428" stroke-width="2"/><path d="M59 112c4 3 10 2 14-1 4-3 8-4 12-2 2 10 2 22-4 32-6 8-18 10-26 4-2-4-2-8 0-14 2-8 2-12 4-19z" fill="#74301a"/><path d="M62 124c4 8 12 10 20 6" stroke="#4a1c0e" stroke-width="3" fill="none" stroke-opacity=".6"/><path d="M70 144c6-4 16-4 22 0l-2 10-18-4z" fill="#8a2a3a"/><path d="M67 153l51 10-3 40-5 0-1 20-14-2 1-14-33-18z" fill="#7e7682"/><path d="M67 153l51 10-.500 4-51-10z" fill="#9a94a0"/><rect x="75" y="181" width="14" height="12" fill="#c4c6d4"/><rect x="77" y="183" width="10" height="8" fill="#a8acc0"/><path d="M117 171c8-2 16 2 18 10l-6 8-14-6z" fill="#9c2a48"/><path d="M58 192c6-4 12-3 18-1 10 4 22 4 32-2 6-4 12-8 18-8 6 2 10 8 8 14-4 8-16 10-28 10-14 0-24-4-34-6-8-1-12-4-14-7z" fill="#c4704a"/><path d="M62 200c10 4 30 10 50 8" stroke="#8a3c20" stroke-width="2" fill="none" stroke-opacity=".7"/><rect x="100" y="314" width="9" height="49" fill="#5c5660"/><rect x="102" y="318" width="5" height="41" fill="#8a86a0"/><path d="M0 203L94 230 103 424 0 432z" fill="url(#wood)"/><path d="M0 172h4l90 35v23L0 203z" fill="url(#woodtop)"/><path d="M0 172h4l90 35" stroke="#8a3a1c" stroke-width="1" fill="none"/><path d="M32.8 239V325" stroke="#d08a58" stroke-opacity=".38" stroke-width="1"/><path d="M80.0 243V324" stroke="#d8986a" stroke-opacity=".38" stroke-width="1"/><path d="M22.4 225V290" stroke="#7e3416" stroke-opacity=".38" stroke-width="1"/><path d="M10.6 276V380" stroke="#d08a58" stroke-opacity=".38" stroke-width="1"/><path d="M92.0 333V413" stroke="#d08a58" stroke-opacity=".38" stroke-width="1"/><path d="M56.8 285V403" stroke="#d08a58" stroke-opacity=".38" stroke-width="1"/><path d="M54.9 242V307" stroke="#d8986a" stroke-opacity=".38" stroke-width="1"/><path d="M13.2 258V361" stroke="#7e3416" stroke-opacity=".38" stroke-width="1"/><path d="M11.8 300V343" stroke="#d08a58" stroke-opacity=".38" stroke-width="1"/><path d="M54.0 231V261" stroke="#7e3416" stroke-opacity=".38" stroke-width="1"/><path d="M49.2 304V403" stroke="#94421e" stroke-opacity=".38" stroke-width="1"/><path d="M57.6 294V348" stroke="#7e3416" stroke-opacity=".38" stroke-width="1"/><path d="M68.4 264V343" stroke="#d8986a" stroke-opacity=".38" stroke-width="1"/><path d="M49.0 274V342" stroke="#d8986a" stroke-opacity=".38" stroke-width="1"/><path d="M95.1 251V316" stroke="#8a3c1c" stroke-opacity=".38" stroke-width="1"/><path d="M16.4 288V317" stroke="#d08a58" stroke-opacity=".38" stroke-width="1"/><path d="M74.6 318V424" stroke="#8a3c1c" stroke-opacity=".38" stroke-width="1"/><path d="M34.3 271V343" stroke="#94421e" stroke-opacity=".38" stroke-width="1"/><path d="M8.5 222V273" stroke="#d08a58" stroke-opacity=".38" stroke-width="1"/><path d="M7.8 319V406" stroke="#94421e" stroke-opacity=".38" stroke-width="1"/><path d="M29.0 275V364" stroke="#d08a58" stroke-opacity=".38" stroke-width="1"/><path d="M91.4 288V371" stroke="#94421e" stroke-opacity=".38" stroke-width="1"/><path d="M7.6 330V367" stroke="#7e3416" stroke-opacity=".38" stroke-width="1"/><path d="M39.8 363V424" stroke="#7e3416" stroke-opacity=".38" stroke-width="1"/><path d="M44.7 306V415" stroke="#94421e" stroke-opacity=".38" stroke-width="1"/><path d="M84.1 274V338" stroke="#8a3c1c" stroke-opacity=".38" stroke-width="1"/><path d="M66.9 285V332" stroke="#d08a58" stroke-opacity=".38" stroke-width="1"/><path d="M18.7 248V295" stroke="#94421e" stroke-opacity=".38" stroke-width="1"/><path d="M81.0 258V309" stroke="#7e3416" stroke-opacity=".38" stroke-width="1"/><path d="M41.8 276V355" stroke="#7e3416" stroke-opacity=".38" stroke-width="1"/><path d="M67.6 307V391" stroke="#d08a58" stroke-opacity=".38" stroke-width="1"/><path d="M45.4 358V424" stroke="#d8986a" stroke-opacity=".38" stroke-width="1"/><path d="M39.3 280V315" stroke="#94421e" stroke-opacity=".38" stroke-width="1"/><path d="M7.9 218V263" stroke="#7e3416" stroke-opacity=".38" stroke-width="1"/><path d="M12.4 305V339" stroke="#d8986a" stroke-opacity=".38" stroke-width="1"/><path d="M16.4 226V286" stroke="#d08a58" stroke-opacity=".38" stroke-width="1"/><path d="M8.7 241V302" stroke="#8a3c1c" stroke-opacity=".38" stroke-width="1"/><path d="M92.8 328V398" stroke="#d08a58" stroke-opacity=".38" stroke-width="1"/><path d="M82.6 388V424" stroke="#94421e" stroke-opacity=".38" stroke-width="1"/><path d="M31.6 237V333" stroke="#8a3c1c" stroke-opacity=".38" stroke-width="1"/><path d="M47.5 329V404" stroke="#7e3416" stroke-opacity=".38" stroke-width="1"/><path d="M92.3 316V355" stroke="#d8986a" stroke-opacity=".38" stroke-width="1"/><path d="M88.8 352V405" stroke="#d08a58" stroke-opacity=".38" stroke-width="1"/><path d="M68.1 267V326" stroke="#7e3416" stroke-opacity=".38" stroke-width="1"/><path d="M35.8 251V327" stroke="#d8986a" stroke-opacity=".38" stroke-width="1"/><path d="M33.3 250V352" stroke="#7e3416" stroke-opacity=".38" stroke-width="1"/><path d="M78.6 359V424" stroke="#7e3416" stroke-opacity=".38" stroke-width="1"/><path d="M21.0 290V384" stroke="#d08a58" stroke-opacity=".38" stroke-width="1"/><path d="M77.1 303V346" stroke="#d8986a" stroke-opacity=".38" stroke-width="1"/><path d="M92.9 303V418" stroke="#8a3c1c" stroke-opacity=".38" stroke-width="1"/><path d="M92.7 290V336" stroke="#7e3416" stroke-opacity=".38" stroke-width="1"/><path d="M46.7 273V343" stroke="#d8986a" stroke-opacity=".38" stroke-width="1"/><path d="M81.8 305V392" stroke="#d08a58" stroke-opacity=".38" stroke-width="1"/><path d="M81.3 248V310" stroke="#7e3416" stroke-opacity=".38" stroke-width="1"/><path d="M47.4 247V347" stroke="#8a3c1c" stroke-opacity=".38" stroke-width="1"/><path d="M10.2 359V424" stroke="#94421e" stroke-opacity=".38" stroke-width="1"/><path d="M40.1 368V424" stroke="#7e3416" stroke-opacity=".38" stroke-width="1"/><path d="M96.3 237V318" stroke="#94421e" stroke-opacity=".38" stroke-width="1"/><path d="M78.6 251V355" stroke="#94421e" stroke-opacity=".38" stroke-width="1"/><path d="M64.4 280V357" stroke="#7e3416" stroke-opacity=".38" stroke-width="1"/><path d="M0 432L103 424" stroke="#4a1808" stroke-width="1.500"/><rect x=".5" y=".5" width="192" height="439" fill="none" stroke="#ffee00"/><rect x=".5" y=".5" width="192" height="439" fill="none" stroke="#000" stroke-dasharray="4 4"/></svg>
<div class="s" style="left:653px;top:20px;width:15px;height:458px;background:#c3c3c3"></div>
<svg style="left:654px;top:22px" width="13" height="12" viewBox="0 0 13 12" ><path d="M6.500 1L1 11h11z" fill="#d6d6d6"/><path d="M6.500 1L1 11" stroke="#fff" fill="none"/><path d="M6.500 1L12 11H1" stroke="#000" fill="none"/></svg>
<svg style="left:654px;top:464px" width="13" height="12" viewBox="0 0 13 12" ><path d="M6.500 11L1 1h11z" fill="#d6d6d6"/><path d="M1 1h11" stroke="#fff" fill="none"/><path d="M1 1L6.500 11" stroke="#fff" fill="none"/><path d="M6.500 11L12 1" stroke="#000" fill="none"/></svg>
<div class="r" style="left:655px;top:35px;width:11px;height:428px;"></div>
<div class="s" style="left:472px;top:480px;width:180px;height:16px;background:#c3c3c3"></div>
<svg style="left:474px;top:482px" width="12" height="12" viewBox="0 0 12 12" ><path d="M1 6L11 1v10z" fill="#d6d6d6"/><path d="M1 6L11 1" stroke="#fff" fill="none"/><path d="M11 1v10L1 6" stroke="#000" fill="none"/></svg>
<svg style="left:638px;top:482px" width="12" height="12" viewBox="0 0 12 12" ><path d="M11 6L1 1v10z" fill="#d6d6d6"/><path d="M1 11V1L11 6" stroke="#fff" fill="none"/><path d="M1 11L11 6" stroke="#000" fill="none"/></svg>
<div class="r" style="left:487px;top:482px;width:150px;height:12px;"></div>
<div class="r" style="left:440px;top:481px;width:14px;height:15px;"></div>
<svg style="left:441px;top:482px" width="12" height="13" viewBox="0 0 12 13" ><rect x="2.500" y="3.500" width="7" height="6" fill="none" stroke="#000" stroke-dasharray="2 1"/></svg>
<div class="r" style="left:455px;top:481px;width:14px;height:15px;"></div>
<svg style="left:456px;top:482px" width="12" height="13" viewBox="0 0 12 13" ><rect x="1.500" y="1" width="10" height="10.500" fill="#e42222"/><rect x="4" y="4" width="5" height="4" fill="none" stroke="#ffd0d0" stroke-width="1"/></svg>
<svg style="left:652px;top:480px" width="18" height="18" viewBox="0 0 18 18" ><path d="M9 2v14M2 9h14" stroke="#000" stroke-width="1.400"/><path d="M9 0l3 4H6zM9 18l3-4H6zM0 9l4-3v6zM18 9l-4-3v6z"/></svg>
<div class="s2" style="left:440px;top:500px;width:46px;height:19px;"></div>
<span class="t " style="left:312.8px;width:300px;text-align:center;top:502.4px;transform-origin:50% 0;transform:scaleX(0.982);">90, 90</span>
<div class="s2" style="left:488px;top:500px;width:60px;height:19px;"></div>
<span class="t " style="left:489.7px;top:502.4px;transform:scaleX(0.982);">05-</span>
<div class="s2" style="left:551px;top:500px;width:78px;height:19px;"></div>
<div class="r" style="left:631px;top:500px;width:37px;height:19px;"></div>
<span class="t dis" style="left:499.5px;width:300px;text-align:center;top:502.4px;transform-origin:50% 0;transform:scaleX(0.887);">Cancel</span>
<div class="wf" style="left:719px;top:1px;width:304px;height:355px;"></div>
<div class="tb tbi" style="left:720px;top:2px;width:302px;height:16px;"></div>
<div class="tb tbi" style="left:720px;top:18px;width:3px;height:8px;background:#9a9a9a"></div>
<div class="tbp " style="left:898px;top:2px;width:12px;height:16px;"></div>
<div class="tbp " style="left:902px;top:2px;width:12px;height:16px;"></div>
<div class="tbl " style="left:907px;top:2px;width:115px;height:16px;"></div>
<svg style="left:727px;top:3px" width="14" height="14" viewBox="0 0 14 14" ><circle cx="7" cy="7" r="5.400" fill="url(#ring)"/><circle cx="7" cy="7" r="4.500" fill="url(#gi)"/><path d="M2.500 7A4.500 4.500 0 0 0 11.500 7z" fill="#b4b4b4"/><path d="M2.500 7A4.500 4.500 0 0 1 11.500 7z" fill="#383838"/><path d="M4.600 7.600h4.800L7 10.400z" fill="#7c7c7c"/></svg>
<svg style="left:1003px;top:3px" width="14" height="14" viewBox="0 0 14 14" ><circle cx="7" cy="7" r="5.400" fill="url(#ring)"/><circle cx="7" cy="7" r="4.500" fill="url(#gi)"/><path d="M4.700 4.700l4.600 4.600M9.300 4.700l-4.600 4.600" stroke="#d2d2d2" stroke-width="1.700" fill="none"/></svg>
<svg style="left:986px;top:3px" width="14" height="14" viewBox="0 0 14 14" ><circle cx="7" cy="7" r="5.400" fill="url(#ring)"/><circle cx="7" cy="7" r="4.500" fill="url(#gi)"/><path d="M5.600 10.600h2.800v-3h2.200L7 3.400 3.400 7.600h2.200z" fill="#d2d2d2"/></svg>
<svg style="left:969px;top:3px" width="14" height="14" viewBox="0 0 14 14" ><circle cx="7" cy="7" r="5.400" fill="url(#ring)"/><circle cx="7" cy="7" r="4.500" fill="url(#gi)"/><path d="M5.600 3.400h2.800v3h2.200L7 10.600 3.400 6.400h2.200z" fill="#d2d2d2"/></svg>
<span class="tt" style="left:746px;top:3.3px;color:#e4e4e4">Layers, Channels &amp; Paths</span>
<div class="wc" style="left:723px;top:18px;width:296px;height:334px;"></div>
<span class="t " style="left:728px;top:32.4px;transform:scaleX(0.927);">Image:</span>
<div class="r" style="left:763px;top:21px;width:222px;height:35px;"></div>
<svg style="left:776px;top:26px" width="11" height="24" viewBox="0 0 11 24" ><rect width="11" height="24" fill="#3a7a70"/><rect y="17" width="11" height="7" fill="#2a7a38"/><path d="M2 24V10l3-5 3 4 1 15z" fill="#b04a28"/><circle cx="5.500" cy="6" r="2.200" fill="#6a2414"/></svg>
<span class="t " style="left:797px;top:32.4px;transform:scaleX(1.005);">05-ignuzius-complete.xcf.gz-1</span>
<div class="r" style="left:964px;top:35px;width:13px;height:8px;"></div>
<div class="s" style="left:988px;top:21px;width:29px;height:35px;background:#c3c3c3"></div>
<span class="t " style="left:992px;top:32.4px;transform:scaleX(0.927);">Auto</span>
<div class="" style="left:725px;top:59px;width:292px;height:1px;background:#8c8c8c"></div>
<div class="" style="left:725px;top:60px;width:292px;height:1px;background:#fff"></div>
<div class="r" style="left:727px;top:88px;width:289px;height:235px;"></div>
<div class="" style="left:768px;top:68px;width:53px;height:21px;background:#c3c3c3;box-shadow:inset 1px 1px 0 #fff,inset -1px 0 0 #000,inset -2px 0 0 #8a8a8a"></div>
<div class="" style="left:821px;top:68px;width:37px;height:21px;background:#c3c3c3;box-shadow:inset 1px 1px 0 #fff,inset -1px 0 0 #000,inset -2px 0 0 #8a8a8a"></div>
<div class="" style="left:727px;top:65px;width:41px;height:25px;background:#d6d6d6;box-shadow:inset 1px 1px 0 #fff,inset -1px 0 0 #000,inset -2px 0 0 #8a8a8a"></div>
<span class="t " style="left:732px;top:70.4px;transform:scaleX(0.927);">Layers</span>
<span class="t " style="left:773px;top:71.4px;transform:scaleX(0.927);">Channels</span>
<span class="t " style="left:826px;top:71.4px;transform:scaleX(0.927);">Paths</span>
<span class="t " style="left:732px;top:98.4px;transform:scaleX(0.927);">Mode:</span>
<div class="r" style="left:767px;top:94px;width:114px;height:24px;"></div>
<span class="t " style="left:774px;top:97.4px;transform:scaleX(0.927);">Normal</span>
<div class="r" style="left:859px;top:102px;width:13px;height:8px;"></div>
<div class="r" style="left:889px;top:100px;width:10px;height:10px;"></div>
<span class="t " style="left:903px;top:98.4px;transform:scaleX(0.927);">Keep Trans.</span>
<span class="t " style="left:732px;top:121.4px;transform:scaleX(0.927);">Opacity:</span>
<div class="s" style="left:774px;top:120px;width:209px;height:17px;background:#c3c3c3"></div>
<div class="r" style="left:950px;top:122px;width:31px;height:13px;"></div>
<div class="" style="left:965px;top:124px;width:1px;height:8px;background:#777"></div>
<div class="" style="left:966px;top:124px;width:1px;height:8px;background:#fff"></div>
<span class="t " style="left:985px;top:121.4px;transform:scaleX(0.927);">100.0</span>
<div class="s" style="left:730px;top:140px;width:263px;height:150px;background:#fff"></div>
<div class="" style="left:732px;top:180px;width:259px;height:38px;background:#000099"></div>
<svg style="left:735px;top:154px" width="22" height="14" viewBox="0 0 22 14" ><path d="M1 7C5 1.500 17 1.500 21 7 17 12.500 5 12.500 1 7z" fill="#fff" stroke="#000" stroke-width="1.800"/><circle cx="11" cy="7" r="4" fill="#000"/><circle cx="12.200" cy="5.800" r="1" fill="#fff"/></svg>
<svg style="left:735px;top:192px" width="22" height="14" viewBox="0 0 22 14" ><path d="M1 7C5 1.500 17 1.500 21 7 17 12.500 5 12.500 1 7z" fill="#000099" stroke="#fff" stroke-width="1.800"/><circle cx="11" cy="7" r="4" fill="#fff"/><circle cx="12.200" cy="5.800" r="1" fill="#000099"/></svg>
<svg style="left:735px;top:230px" width="22" height="14" viewBox="0 0 22 14" ><path d="M1 7C5 1.500 17 1.500 21 7 17 12.500 5 12.500 1 7z" fill="#fff" stroke="#000" stroke-width="1.800"/><circle cx="11" cy="7" r="4" fill="#000"/><circle cx="12.200" cy="5.800" r="1" fill="#fff"/></svg>
<svg style="left:790px;top:145px" width="14" height="32" viewBox="0 0 14 32" ><rect width="14" height="32" fill="#4a1a10"/><path d="M1 32V14l3-6 3 5 2 19z" fill="#c0502c"/><rect x="9" y="6" width="5" height="26" fill="#1a1210"/><circle cx="5" cy="9" r="2.500" fill="#7a3018"/></svg>
<div class="" style="left:810px;top:143px;width:19px;height:36px;background:#000"></div>
<svg style="left:810px;top:143px" width="19" height="36" viewBox="0 0 19 36" ><path d="M4 32V18c0-4 2-6 3-9 1-3 4-3 5 0 1 3 3 5 3 9v12l-4 2z" fill="#fff"/></svg>
<div class="" style="left:788px;top:182px;width:18px;height:36px;background:#fff"></div>
<svg style="left:790px;top:184px" width="14" height="32" viewBox="0 0 14 32" ><rect width="14" height="32" fill="#999"/><path d="M0 0h4v4h-4zM8 0h4v4h-4zM4 4h4v4h-4zM12 4h4v4h-4zM0 8h4v4h-4zM8 8h4v4h-4zM4 12h4v4h-4zM12 12h4v4h-4zM0 16h4v4h-4zM8 16h4v4h-4zM4 20h4v4h-4zM12 20h4v4h-4zM0 24h4v4h-4zM8 24h4v4h-4zM4 28h4v4h-4zM12 28h4v4h-4z" fill="#666"/><rect width="14" height="32" fill="#ffd732" fill-opacity=".27"/><circle cx="6" cy="7" r="6" fill="#f6f060" fill-opacity=".7"/><circle cx="6" cy="7" r="2.500" fill="#ffffc0"/></svg>
<div class="" style="left:788px;top:220px;width:18px;height:36px;background:#000"></div>
<div class="" style="left:790px;top:222px;width:14px;height:32px;background:linear-gradient(#1c5ca0 0,#3a7ab8 35%,#e8f0f0 58%,#2a8a3a 66%,#1a6a2a 100%)"></div>
<div class="" style="left:788px;top:257px;width:18px;height:31px;background:#000"></div>
<span class="t " style="left:834px;top:154.4px;transform:scaleX(0.927);">Hintergrund</span>
<span class="t " style="left:816px;top:192.4px;transform:scaleX(0.927);color:#fff">Neue Ebene#3</span>
<span class="t " style="left:816px;top:230.4px;transform:scaleX(0.927);">Neue Ebene#2</span>
<span class="t " style="left:816px;top:268.4px;transform:scaleX(0.927);">Neue Ebene</span>
<div class="s" style="left:995px;top:140px;width:17px;height:150px;background:#c3c3c3"></div>
<svg style="left:997px;top:142px" width="13" height="13" viewBox="0 0 13 13" ><path d="M6.500 1L1 12h11z" fill="#d6d6d6"/><path d="M6.500 1L1 12" stroke="#fff" fill="none"/><path d="M6.500 1L12 12H1" stroke="#000" fill="none"/></svg>
<svg style="left:997px;top:275px" width="13" height="13" viewBox="0 0 13 13" ><path d="M6.500 12L1 1h11z" fill="#d6d6d6"/><path d="M1 1h11M1 1L6.500 12" stroke="#fff" fill="none"/><path d="M6.500 12L12 1" stroke="#000" fill="none"/></svg>
<div class="r" style="left:997px;top:156px;width:13px;height:118px;"></div>
<div class="r" style="left:729px;top:295px;width:47px;height:25px;"></div>
<div class="r" style="left:776px;top:295px;width:47px;height:25px;"></div>
<div class="r" style="left:823px;top:295px;width:47px;height:25px;"></div>
<div class="r" style="left:870px;top:295px;width:47px;height:25px;"></div>
<div class="r" style="left:917px;top:295px;width:47px;height:25px;"></div>
<div class="r" style="left:964px;top:295px;width:47px;height:25px;"></div>
<svg style="left:746px;top:300px" width="16" height="16" viewBox="0 0 16 16" ><path d="M5.500 2.500h8v11h-11v-8z" fill="#fff" stroke="#000" stroke-width="1.200"/><path d="M5.500 2.500v3h-3" fill="none" stroke="#000" stroke-width="1.200"/></svg>
<svg style="left:793px;top:300px" width="16" height="16" viewBox="0 0 16 16" ><path d="M8 2L2 13.500h12z" fill="#b0b0b0" stroke="#000"/><path d="M8 4l-4.500 8.500" stroke="#fff" fill="none"/></svg>
<svg style="left:840px;top:300px" width="16" height="16" viewBox="0 0 16 16" ><path d="M8 14L2 2.500h12z" fill="#b0b0b0" stroke="#000"/><path d="M3.500 3.500h9" stroke="#fff" fill="none"/></svg>
<svg style="left:886px;top:299px" width="18" height="18" viewBox="0 0 18 18" ><path d="M5.500 1.500h6v10h-9v-7z" fill="#fff" stroke="#000" stroke-width="1.200"/><path d="M9.500 5.500h6v10h-9v-7z" fill="#fff" stroke="#000" stroke-width="1.200"/></svg>
<svg style="left:933px;top:299px" width="18" height="18" viewBox="0 0 18 18" ><g fill="none" stroke="#8c8c8c" stroke-width="1.400"><circle cx="9" cy="3.500" r="1.800"/><path d="M9 5.500v10M5.500 8h7M2.500 11c.5 3 3 4.500 6.500 4.500s6-1.500 6.500-4.500M2.500 11l-1 2.500M15.500 11l1 2.500"/></g><path d="M10 5.500v10" stroke="#fff" stroke-width=".8"/></svg>
<svg style="left:980px;top:299px" width="18" height="18" viewBox="0 0 18 18" ><path d="M4 5.500h10l-1 10.500h-8z" fill="#d6d6d6" stroke="#000" stroke-width="1.200"/><path d="M3 4.500h12M7 2.500h4M6.500 7v7.500M9 7v7.500M11.500 7v7.500" stroke="#000" stroke-width="1.200" fill="none"/></svg>
<div class="" style="left:725px;top:325px;width:292px;height:1px;background:#8c8c8c"></div>
<div class="" style="left:725px;top:326px;width:292px;height:1px;background:#fff"></div>
<div class="r" style="left:725px;top:330px;width:292px;height:20px;"></div>
<span class="t " style="left:721px;width:300px;text-align:center;top:333.4px;transform-origin:50% 0;transform:scaleX(0.927);">Close</span>
<div class="wf" style="left:676px;top:356px;width:304px;height:398px;"></div>
<div class="tb tbi" style="left:677px;top:357px;width:302px;height:16px;"></div>
<div class="tb tbi" style="left:677px;top:373px;width:3px;height:8px;background:#9a9a9a"></div>
<div class="tbp " style="left:767px;top:357px;width:12px;height:16px;"></div>
<div class="tbp " style="left:771px;top:357px;width:12px;height:16px;"></div>
<div class="tbl " style="left:776px;top:357px;width:203px;height:16px;"></div>
<svg style="left:684px;top:358px" width="14" height="14" viewBox="0 0 14 14" ><circle cx="7" cy="7" r="5.400" fill="url(#ring)"/><circle cx="7" cy="7" r="4.500" fill="url(#gi)"/><path d="M2.500 7A4.500 4.500 0 0 0 11.500 7z" fill="#b4b4b4"/><path d="M2.500 7A4.500 4.500 0 0 1 11.500 7z" fill="#383838"/><path d="M4.600 7.600h4.800L7 10.400z" fill="#7c7c7c"/></svg>
<svg style="left:960px;top:358px" width="14" height="14" viewBox="0 0 14 14" ><circle cx="7" cy="7" r="5.400" fill="url(#ring)"/><circle cx="7" cy="7" r="4.500" fill="url(#gi)"/><path d="M4.700 4.700l4.600 4.600M9.300 4.700l-4.600 4.600" stroke="#d2d2d2" stroke-width="1.700" fill="none"/></svg>
<svg style="left:943px;top:358px" width="14" height="14" viewBox="0 0 14 14" ><circle cx="7" cy="7" r="5.400" fill="url(#ring)"/><circle cx="7" cy="7" r="4.500" fill="url(#gi)"/><path d="M5.600 10.600h2.800v-3h2.200L7 3.400 3.400 7.600h2.200z" fill="#d2d2d2"/></svg>
<svg style="left:926px;top:358px" width="14" height="14" viewBox="0 0 14 14" ><circle cx="7" cy="7" r="5.400" fill="url(#ring)"/><circle cx="7" cy="7" r="4.500" fill="url(#gi)"/><path d="M5.600 3.400h2.800v3h2.200L7 10.600 3.400 6.400h2.200z" fill="#d2d2d2"/></svg>
<span class="tt" style="left:703.7px;top:358.3px;color:#e4e4e4">SuperNova</span>
<div class="wc" style="left:680px;top:373px;width:296px;height:377px;"></div>
<div class="" style="left:688px;top:386px;width:281px;height:320px;box-shadow:inset 1px 1px 0 #8c8c8c,inset -1px -1px 0 #fff,inset 2px 2px 0 #fff,inset -2px -2px 0 #8c8c8c"></div>
<div class="" style="left:691px;top:383px;width:90px;height:8px;background:#d6d6d6"></div>
<span class="t " style="left:693px;top:379.4px;transform:scaleX(0.912);">Parameter Settings</span>
<div class="" style="left:731px;top:407px;width:194px;height:198px;box-shadow:inset 1px 1px 0 #8c8c8c,inset -1px -1px 0 #fff,inset 2px 2px 0 #fff,inset -2px -2px 0 #8c8c8c"></div>
<div class="" style="left:734px;top:404px;width:102px;height:8px;background:#d6d6d6"></div>
<span class="t " style="left:736px;top:400.4px;transform:scaleX(0.944);">Center of SuperNova</span>
<span class="t " style="left:737px;top:421.4px;transform:scaleX(0.927);">X:</span>
<div class="s2" style="left:750px;top:419px;width:60px;height:19px;background:#fff"></div>
<span class="t " style="left:754px;top:421.4px;transform:scaleX(0.948);">90</span>
<svg style="left:812px;top:419px" width="11" height="18" viewBox="0 0 11 18" ><path d="M5.500 1L1 8h9z" fill="#d6d6d6"/><path d="M5.500 1L1 8" stroke="#fff" fill="none"/><path d="M5.500 1L10 8H1" stroke="#000" fill="none"/><path d="M5.500 17L1 10h9z" fill="#d6d6d6"/><path d="M1 10h9M1 10L5.500 17" stroke="#fff" fill="none"/><path d="M5.500 17L10 10" stroke="#000" fill="none"/></svg>
<span class="t " style="left:832px;top:421.4px;transform:scaleX(0.927);">Y:</span>
<div class="s2" style="left:845px;top:419px;width:60px;height:19px;background:#fff"></div>
<span class="t " style="left:849px;top:421.4px;transform:scaleX(0.948);">90</span>
<svg style="left:908px;top:419px" width="11" height="18" viewBox="0 0 11 18" ><path d="M5.500 1L1 8h9z" fill="#d6d6d6"/><path d="M5.500 1L1 8" stroke="#fff" fill="none"/><path d="M5.500 1L10 8H1" stroke="#000" fill="none"/><path d="M5.500 17L1 10h9z" fill="#d6d6d6"/><path d="M1 10h9M1 10L5.500 17" stroke="#fff" fill="none"/><path d="M5.500 17L10 10" stroke="#000" fill="none"/></svg>
<div class="s" style="left:798px;top:442px;width:60px;height:132px;"></div>
<svg style="left:800px;top:444px" width="56" height="128" viewBox="0 0 56 128" ><rect width="56" height="128" fill="#999"/><path d="M0 0h4v4h-4zM8 0h4v4h-4zM16 0h4v4h-4zM24 0h4v4h-4zM32 0h4v4h-4zM40 0h4v4h-4zM48 0h4v4h-4zM4 4h4v4h-4zM12 4h4v4h-4zM20 4h4v4h-4zM28 4h4v4h-4zM36 4h4v4h-4zM44 4h4v4h-4zM52 4h4v4h-4zM0 8h4v4h-4zM8 8h4v4h-4zM16 8h4v4h-4zM24 8h4v4h-4zM32 8h4v4h-4zM40 8h4v4h-4zM48 8h4v4h-4zM4 12h4v4h-4zM12 12h4v4h-4zM20 12h4v4h-4zM28 12h4v4h-4zM36 12h4v4h-4zM44 12h4v4h-4zM52 12h4v4h-4zM0 16h4v4h-4zM8 16h4v4h-4zM16 16h4v4h-4zM24 16h4v4h-4zM32 16h4v4h-4zM40 16h4v4h-4zM48 16h4v4h-4zM4 20h4v4h-4zM12 20h4v4h-4zM20 20h4v4h-4zM28 20h4v4h-4zM36 20h4v4h-4zM44 20h4v4h-4zM52 20h4v4h-4zM0 24h4v4h-4zM8 24h4v4h-4zM16 24h4v4h-4zM24 24h4v4h-4zM32 24h4v4h-4zM40 24h4v4h-4zM48 24h4v4h-4zM4 28h4v4h-4zM12 28h4v4h-4zM20 28h4v4h-4zM28 28h4v4h-4zM36 28h4v4h-4zM44 28h4v4h-4zM52 28h4v4h-4zM0 32h4v4h-4zM8 32h4v4h-4zM16 32h4v4h-4zM24 32h4v4h-4zM32 32h4v4h-4zM40 32h4v4h-4zM48 32h4v4h-4zM4 36h4v4h-4zM12 36h4v4h-4zM20 36h4v4h-4zM28 36h4v4h-4zM36 36h4v4h-4zM44 36h4v4h-4zM52 36h4v4h-4zM0 40h4v4h-4zM8 40h4v4h-4zM16 40h4v4h-4zM24 40h4v4h-4zM32 40h4v4h-4zM40 40h4v4h-4zM48 40h4v4h-4zM4 44h4v4h-4zM12 44h4v4h-4zM20 44h4v4h-4zM28 44h4v4h-4zM36 44h4v4h-4zM44 44h4v4h-4zM52 44h4v4h-4zM0 48h4v4h-4zM8 48h4v4h-4zM16 48h4v4h-4zM24 48h4v4h-4zM32 48h4v4h-4zM40 48h4v4h-4zM48 48h4v4h-4zM4 52h4v4h-4zM12 52h4v4h-4zM20 52h4v4h-4zM28 52h4v4h-4zM36 52h4v4h-4zM44 52h4v4h-4zM52 52h4v4h-4zM0 56h4v4h-4zM8 56h4v4h-4zM16 56h4v4h-4zM24 56h4v4h-4zM32 56h4v4h-4zM40 56h4v4h-4zM48 56h4v4h-4zM4 60h4v4h-4zM12 60h4v4h-4zM20 60h4v4h-4zM28 60h4v4h-4zM36 60h4v4h-4zM44 60h4v4h-4zM52 60h4v4h-4zM0 64h4v4h-4zM8 64h4v4h-4zM16 64h4v4h-4zM24 64h4v4h-4zM32 64h4v4h-4zM40 64h4v4h-4zM48 64h4v4h-4zM4 68h4v4h-4zM12 68h4v4h-4zM20 68h4v4h-4zM28 68h4v4h-4zM36 68h4v4h-4zM44 68h4v4h-4zM52 68h4v4h-4zM0 72h4v4h-4zM8 72h4v4h-4zM16 72h4v4h-4zM24 72h4v4h-4zM32 72h4v4h-4zM40 72h4v4h-4zM48 72h4v4h-4zM4 76h4v4h-4zM12 76h4v4h-4zM20 76h4v4h-4zM28 76h4v4h-4zM36 76h4v4h-4zM44 76h4v4h-4zM52 76h4v4h-4zM0 80h4v4h-4zM8 80h4v4h-4zM16 80h4v4h-4zM24 80h4v4h-4zM32 80h4v4h-4zM40 80h4v4h-4zM48 80h4v4h-4zM4 84h4v4h-4zM12 84h4v4h-4zM20 84h4v4h-4zM28 84h4v4h-4zM36 84h4v4h-4zM44 84h4v4h-4zM52 84h4v4h-4zM0 88h4v4h-4zM8 88h4v4h-4zM16 88h4v4h-4zM24 88h4v4h-4zM32 88h4v4h-4zM40 88h4v4h-4zM48 88h4v4h-4zM4 92h4v4h-4zM12 92h4v4h-4zM20 92h4v4h-4zM28 92h4v4h-4zM36 92h4v4h-4zM44 92h4v4h-4zM52 92h4v4h-4zM0 96h4v4h-4zM8 96h4v4h-4zM16 96h4v4h-4zM24 96h4v4h-4zM32 96h4v4h-4zM40 96h4v4h-4zM48 96h4v4h-4zM4 100h4v4h-4zM12 100h4v4h-4zM20 100h4v4h-4zM28 100h4v4h-4zM36 100h4v4h-4zM44 100h4v4h-4zM52 100h4v4h-4zM0 104h4v4h-4zM8 104h4v4h-4zM16 104h4v4h-4zM24 104h4v4h-4zM32 104h4v4h-4zM40 104h4v4h-4zM48 104h4v4h-4zM4 108h4v4h-4zM12 108h4v4h-4zM20 108h4v4h-4zM28 108h4v4h-4zM36 108h4v4h-4zM44 108h4v4h-4zM52 108h4v4h-4zM0 112h4v4h-4zM8 112h4v4h-4zM16 112h4v4h-4zM24 112h4v4h-4zM32 112h4v4h-4zM40 112h4v4h-4zM48 112h4v4h-4zM4 116h4v4h-4zM12 116h4v4h-4zM20 116h4v4h-4zM28 116h4v4h-4zM36 116h4v4h-4zM44 116h4v4h-4zM52 116h4v4h-4zM0 120h4v4h-4zM8 120h4v4h-4zM16 120h4v4h-4zM24 120h4v4h-4zM32 120h4v4h-4zM40 120h4v4h-4zM48 120h4v4h-4zM4 124h4v4h-4zM12 124h4v4h-4zM20 124h4v4h-4zM28 124h4v4h-4zM36 124h4v4h-4zM44 124h4v4h-4zM52 124h4v4h-4z" fill="#666"/><defs><radialGradient id="nova" cx="25" cy="28" r="34" gradientUnits="userSpaceOnUse"><stop offset="0" stop-color="#ffffe8"/><stop offset=".1" stop-color="#fff860"/><stop offset=".3" stop-color="#f4e23c" stop-opacity=".7"/><stop offset=".6" stop-color="#e8d040" stop-opacity=".25"/><stop offset="1" stop-color="#e0c840" stop-opacity="0"/></radialGradient></defs><rect width="56" height="128" fill="#ffd732" fill-opacity=".27"/><rect width="56" height="128" fill="url(#nova)"/><path d="M25 28L43.7 27.8M25 28L40.6 36.1M25 28L38.4 41.5M25 28L33.0 44.3M25 28L24.4 49.5M25 28L20.3 42.9M25 28L11.0 44.6M25 28L13.3 32.3M25 28L1.5 25.6M25 28L7.3 20.0M25 28L15.8 20.0M25 28L20.2 16.2M25 28L24.0 13.1M25 28L30.1 11.2M25 28L40.4 12.2M25 28L43.2 20.5" stroke="#fff870" stroke-opacity=".55" stroke-width="1" fill="none"/></svg>
<div class="r" style="left:739px;top:585px;width:10px;height:10px;"></div>
<span class="t " style="left:753px;top:582.4px;transform:scaleX(0.927);">Show Cursor</span>
<span class="t " style="right:270px;top:618.4px;transform-origin:100% 0;transform:scaleX(0.927);">Color:</span>
<div class="r" style="left:759px;top:614px;width:124px;height:22px;"></div>
<div class="" style="left:762px;top:617px;width:118px;height:16px;background:#ffcc10"></div>
<span class="t " style="right:270px;top:641.4px;transform-origin:100% 0;transform:scaleX(0.927);">Radius:</span>
<div class="s" style="left:760px;top:639px;width:123px;height:17px;background:#c3c3c3"></div>
<div class="r" style="left:775px;top:641px;width:31px;height:13px;"></div>
<div class="" style="left:790px;top:643px;width:1px;height:8px;background:#777"></div>
<div class="" style="left:791px;top:643px;width:1px;height:8px;background:#fff"></div>
<div class="s2" style="left:888px;top:638px;width:60px;height:19px;background:#fff"></div>
<span class="t " style="left:892px;top:640.9px;transform:scaleX(0.948);">16</span>
<svg style="left:950px;top:638px" width="11" height="18" viewBox="0 0 11 18" ><path d="M5.500 1L1 8h9z" fill="#d6d6d6"/><path d="M5.500 1L1 8" stroke="#fff" fill="none"/><path d="M5.500 1L10 8H1" stroke="#000" fill="none"/><path d="M5.500 17L1 10h9z" fill="#d6d6d6"/><path d="M1 10h9M1 10L5.500 17" stroke="#fff" fill="none"/><path d="M5.500 17L10 10" stroke="#000" fill="none"/></svg>
<span class="t " style="right:270px;top:663.4px;transform-origin:100% 0;transform:scaleX(0.927);">Spokes:</span>
<div class="s" style="left:760px;top:661px;width:123px;height:17px;background:#c3c3c3"></div>
<div class="r" style="left:769px;top:663px;width:31px;height:13px;"></div>
<div class="" style="left:784px;top:665px;width:1px;height:8px;background:#777"></div>
<div class="" style="left:785px;top:665px;width:1px;height:8px;background:#fff"></div>
<div class="s2" style="left:888px;top:660px;width:60px;height:19px;background:#fff"></div>
<span class="t " style="left:892px;top:662.9px;transform:scaleX(0.948);">100</span>
<svg style="left:950px;top:660px" width="11" height="18" viewBox="0 0 11 18" ><path d="M5.500 1L1 8h9z" fill="#d6d6d6"/><path d="M5.500 1L1 8" stroke="#fff" fill="none"/><path d="M5.500 1L10 8H1" stroke="#000" fill="none"/><path d="M5.500 17L1 10h9z" fill="#d6d6d6"/><path d="M1 10h9M1 10L5.500 17" stroke="#fff" fill="none"/><path d="M5.500 17L10 10" stroke="#000" fill="none"/></svg>
<span class="t " style="right:270px;top:683.4px;transform-origin:100% 0;transform:scaleX(0.927);">Random Hue:</span>
<div class="s" style="left:760px;top:681px;width:123px;height:17px;background:#c3c3c3"></div>
<div class="r" style="left:762px;top:683px;width:31px;height:13px;"></div>
<div class="" style="left:777px;top:685px;width:1px;height:8px;background:#777"></div>
<div class="" style="left:778px;top:685px;width:1px;height:8px;background:#fff"></div>
<div class="s2" style="left:888px;top:680px;width:60px;height:19px;background:#fff"></div>
<span class="t " style="left:892px;top:682.9px;transform:scaleX(0.948);">0</span>
<svg style="left:950px;top:680px" width="11" height="18" viewBox="0 0 11 18" ><path d="M5.500 1L1 8h9z" fill="#d6d6d6"/><path d="M5.500 1L1 8" stroke="#fff" fill="none"/><path d="M5.500 1L10 8H1" stroke="#000" fill="none"/><path d="M5.500 17L1 10h9z" fill="#d6d6d6"/><path d="M1 10h9M1 10L5.500 17" stroke="#fff" fill="none"/><path d="M5.500 17L10 10" stroke="#000" fill="none"/></svg>
<div class="" style="left:682px;top:712px;width:292px;height:1px;background:#8c8c8c"></div>
<div class="" style="left:682px;top:713px;width:292px;height:1px;background:#fff"></div>
<div class="s2" style="left:800px;top:717px;width:84px;height:30px;"></div>
<div class="r" style="left:805px;top:722px;width:74px;height:20px;"></div>
<span class="t " style="left:692px;width:300px;text-align:center;top:725.4px;transform-origin:50% 0;transform:scaleX(0.927);">OK</span>
<div class="r" style="left:894px;top:722px;width:74px;height:20px;"></div>
<span class="t " style="left:781px;width:300px;text-align:center;top:725.4px;transform-origin:50% 0;transform:scaleX(0.927);">Cancel</span>
<svg style="left:0px;top:0px" width="1024" height="768" viewBox="0 0 1024 768" class="ann"><path d="M31 324c20 1 45-1 60 0 8 .500 14-1 19-1" stroke="#ee0000" fill="none" stroke-linecap="round" stroke-linejoin="round" stroke-width="2"/><path d="M123 546c10-2 30-2 45 0 20 2 38 1 49 2" stroke="#ee0000" fill="none" stroke-linecap="round" stroke-linejoin="round" stroke-width="3"/><path d="M372 600C368.3 599.7 357.8 597.5 350 598C342.2 598.5 332.3 600.3 325 603C317.7 605.7 309.8 610.2 306 614C302.2 617.8 301.0 622.2 302 626C303.0 629.8 306.5 634.0 312 637C317.5 640.0 326.7 642.5 335 644C343.3 645.5 352.8 646.3 362 646C371.2 645.7 382.3 644.2 390 642C397.7 639.8 404.0 636.3 408 633C412.0 629.7 414.0 625.8 414 622C414.0 618.2 411.7 613.3 408 610C404.3 606.7 398.7 604.2 392 602C385.3 599.8 372.0 597.8 368 597" stroke="#ee0000" fill="none" stroke-linecap="round" stroke-linejoin="round" stroke-width="6"/><path d="M389 608C387.7 607.2 383.8 604.3 381 603C378.2 601.7 373.5 600.5 372 600" stroke="#ee0000" fill="none" stroke-linecap="round" stroke-linejoin="round" stroke-width="3"/><ellipse cx="466.500" cy="512" rx="50" ry="24.500" transform="rotate(-3 466 512)" stroke="#ee0000" fill="none" stroke-linecap="round" stroke-linejoin="round" stroke-width="5"/><path d="M474 488c3 2 5 4 6 7" stroke="#ee0000" fill="none" stroke-linecap="round" stroke-linejoin="round" stroke-width="2"/><path d="M548 477L515 507" stroke="#ee0000" fill="none" stroke-linecap="round" stroke-linejoin="round" stroke-width="3"/><path d="M516 507c18 3 36 3 54 5" stroke="#ee0000" fill="none" stroke-linecap="round" stroke-linejoin="round" stroke-width="6"/><path d="M540 498C600 486 670 474 724 460" stroke="#ee0000" fill="none" stroke-linecap="round" stroke-linejoin="round" stroke-width="5"/><path d="M678 454c16 1 34 2 48 5" stroke="#ee0000" fill="none" stroke-linecap="round" stroke-linejoin="round" stroke-width="6"/><path d="M726 459c-12 8-26 20-36 28" stroke="#ee0000" fill="none" stroke-linecap="round" stroke-linejoin="round" stroke-width="6"/><path d="M850 399C845.3 398.2 831.8 395.2 822 394C812.2 392.8 801.3 391.7 791 392C780.7 392.3 769.0 393.7 760 396C751.0 398.3 743.5 402.3 737 406C730.5 409.7 724.5 414.0 721 418C717.5 422.0 715.8 425.8 716 430C716.2 434.2 717.2 438.7 722 443C726.8 447.3 734.5 452.7 745 456C755.5 459.3 771.5 461.5 785 463C798.5 464.5 812.2 465.0 826 465C839.8 465.0 856.0 464.5 868 463C880.0 461.5 890.8 459.5 898 456C905.2 452.5 909.7 447.2 911 442C912.3 436.8 910.0 430.2 906 425C902.0 419.8 894.3 414.7 887 411C879.7 407.3 866.2 404.3 862 403" stroke="#ee0000" fill="none" stroke-linecap="round" stroke-linejoin="round" stroke-width="5"/><path d="M718 436C719.3 437.7 721.5 442.7 726 446C730.5 449.3 735.2 453.2 745 456C754.8 458.8 771.5 461.5 785 463C798.5 464.5 812.2 465.0 826 465C839.8 465.0 856.0 464.5 868 463C880.0 461.5 891.2 458.8 898 456C904.8 453.2 907.2 447.7 909 446" stroke="#ee0000" fill="none" stroke-linecap="round" stroke-linejoin="round" stroke-width="7.500"/><path d="M760 396C756.2 397.7 743.5 402.3 737 406C730.5 409.7 724.5 414.0 721 418C717.5 422.0 716.5 427.0 716 430C715.5 433.0 717.7 435.0 718 436" stroke="#ee0000" fill="none" stroke-linecap="round" stroke-linejoin="round" stroke-width="6.500"/><path d="M874 406C872.0 405.3 866.0 403.2 862 402C858.0 400.8 852.0 399.5 850 399" stroke="#ee0000" fill="none" stroke-linecap="round" stroke-linejoin="round" stroke-width="2.500"/><path d="M862 403C859.3 402.3 851.0 400.0 846 399C841.0 398.0 834.3 397.3 832 397" stroke="#ee0000" fill="none" stroke-linecap="round" stroke-linejoin="round" stroke-width="2.500"/></svg>
</body></html>
